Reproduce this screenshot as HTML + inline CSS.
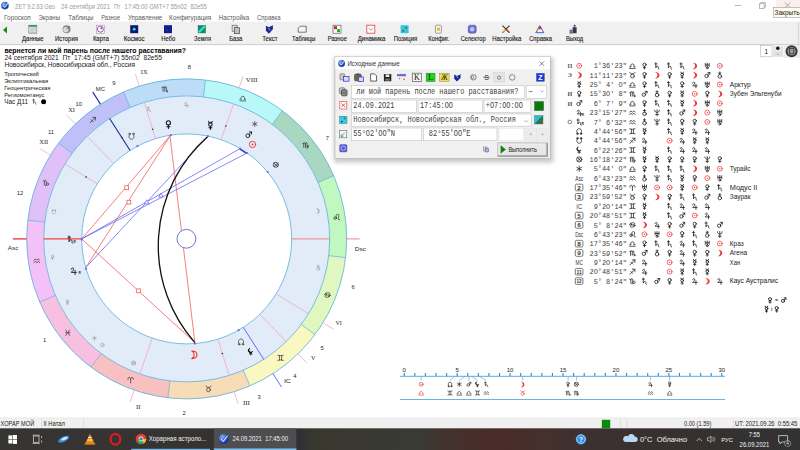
<!DOCTYPE html><html><head><meta charset="utf-8"><style>html,body{margin:0;padding:0;width:800px;height:450px;overflow:hidden;background:#fff}svg{display:block}</style></head><body>
<svg width="800" height="450" viewBox="0 0 800 450" font-family="Liberation Sans">
<defs>
<symbol id="g_sun" viewBox="0 0 10 10" overflow="visible" stroke-linecap="round" stroke-linejoin="round"><circle cx="5" cy="5" r="3.6" fill="none"/><circle cx="5" cy="5" r="1" stroke="none" fill="currentColor"/></symbol>
<symbol id="g_moon" viewBox="0 0 10 10" overflow="visible" stroke-linecap="round" stroke-linejoin="round"><path d="M3.2,0.8 A4.3,4.3 0 0 1 3.2,9.2 A3.2,4.1 0 0 0 3.2,0.8 Z" fill="currentColor"/></symbol>
<symbol id="g_mercury" viewBox="0 0 10 10" overflow="visible" stroke-linecap="round" stroke-linejoin="round"><path d="M3,0.6 A2,2 0 0 0 7,0.6" fill="none"/><circle cx="5" cy="4.2" r="2" fill="none"/><path d="M5,6.2 V9.8 M3.3,8 H6.7" fill="none"/></symbol>
<symbol id="g_venus" viewBox="0 0 10 10" overflow="visible" stroke-linecap="round" stroke-linejoin="round"><circle cx="5" cy="3.4" r="2.4" fill="none"/><path d="M5,5.8 V9.8 M3.2,7.8 H6.8" fill="none"/></symbol>
<symbol id="g_mars" viewBox="0 0 10 10" overflow="visible" stroke-linecap="round" stroke-linejoin="round"><circle cx="4" cy="6.2" r="2.5" fill="none"/><path d="M5.8,4.4 L8.8,1.2 M6,1.2 H8.8 V4" fill="none"/></symbol>
<symbol id="g_jupiter" viewBox="0 0 10 10" overflow="visible" stroke-linecap="round" stroke-linejoin="round"><path d="M2,3 C2,0.8 5.5,0.8 5,3 C4.7,4.6 2.5,6.5 2,7 H8.5 M6.8,4.5 V9.8" fill="none"/></symbol>
<symbol id="g_saturn" viewBox="0 0 10 10" overflow="visible" stroke-linecap="round" stroke-linejoin="round"><path d="M3.2,0.5 V8 C3.2,5 7.5,4.8 7,7.6 C6.7,8.8 6.6,9.6 8,9.8 M1.8,2.2 H5" fill="none"/></symbol>
<symbol id="g_uranus" viewBox="0 0 10 10" overflow="visible" stroke-linecap="round" stroke-linejoin="round"><path d="M2,1.5 C2.5,4 2.5,5 2,6 M8,1.5 C7.5,4 7.5,5 8,6 M2.2,3.8 H7.8 M5,1 V6.5" fill="none"/><circle cx="5" cy="8" r="1.5" fill="none"/></symbol>
<symbol id="g_neptune" viewBox="0 0 10 10" overflow="visible" stroke-linecap="round" stroke-linejoin="round"><path d="M1.5,1.5 C1.5,6 8.5,6 8.5,1.5 M5,0.8 V9.8 M3,7.8 H7" fill="none"/></symbol>
<symbol id="g_earth" viewBox="0 0 10 10" overflow="visible" stroke-linecap="round" stroke-linejoin="round"><circle cx="5" cy="6.8" r="2.6" fill="none"/><path d="M5,4.2 V0.4 M3.3,2 H6.7" fill="none"/></symbol>
<symbol id="g_node" viewBox="0 0 10 10" overflow="visible" stroke-linecap="round" stroke-linejoin="round"><path d="M2.8,8.5 C0.6,6.5 1,1.2 5,1.2 C9,1.2 9.4,6.5 7.2,8.5" fill="none"/><circle cx="2.3" cy="8.6" r="1.1" fill="none"/><circle cx="7.7" cy="8.6" r="1.1" fill="none"/></symbol>
<symbol id="g_snode" viewBox="0 0 10 10" overflow="visible" stroke-linecap="round" stroke-linejoin="round"><path d="M2.8,1.5 C0.6,3.5 1,8.8 5,8.8 C9,8.8 9.4,3.5 7.2,1.5" fill="none"/><circle cx="2.3" cy="1.4" r="1.1" fill="none"/><circle cx="7.7" cy="1.4" r="1.1" fill="none"/></symbol>
<symbol id="g_lilith" viewBox="0 0 10 10" overflow="visible" stroke-linecap="round" stroke-linejoin="round"><path d="M3,0.8 A3.2,3.2 0 1 0 7.5,5 A2.6,2.6 0 1 1 3,0.8 Z" fill="currentColor"/><path d="M5,6.5 V9.8 M3.3,8.3 H6.7" fill="none"/></symbol>
<symbol id="g_fortune" viewBox="0 0 10 10" overflow="visible" stroke-linecap="round" stroke-linejoin="round"><circle cx="5" cy="5" r="3.8" fill="none"/><path d="M2.3,2.3 L7.7,7.7 M7.7,2.3 L2.3,7.7" fill="none"/></symbol>
<symbol id="g_star" viewBox="0 0 10 10" overflow="visible" stroke-linecap="round" stroke-linejoin="round"><path d="M5,1 V9 M1.5,3 L8.5,7 M8.5,3 L1.5,7" fill="none"/></symbol>
<symbol id="g_aries" viewBox="0 0 10 10" overflow="visible" stroke-linecap="round" stroke-linejoin="round"><path d="M1,4.5 C0.5,1 4.5,0.5 5,4 V9.8 M5,4 C5.5,0.5 9.5,1 9,4.5" fill="none"/></symbol>
<symbol id="g_taurus" viewBox="0 0 10 10" overflow="visible" stroke-linecap="round" stroke-linejoin="round"><circle cx="5" cy="6.4" r="2.8" fill="none"/><path d="M1,1 C1.8,3.6 8.2,3.6 9,1" fill="none"/></symbol>
<symbol id="g_gemini" viewBox="0 0 10 10" overflow="visible" stroke-linecap="round" stroke-linejoin="round"><path d="M1,1.2 C3.5,2.2 6.5,2.2 9,1.2 M1,8.8 C3.5,7.8 6.5,7.8 9,8.8 M3.4,1.8 V8.2 M6.6,1.8 V8.2" fill="none"/></symbol>
<symbol id="g_cancer" viewBox="0 0 10 10" overflow="visible" stroke-linecap="round" stroke-linejoin="round"><path d="M1.2,4 C2,1 8,0.8 9,3 M8.8,6 C8,9 2,9.2 1,7" fill="none"/><circle cx="2.6" cy="4.3" r="1.5" fill="none"/><circle cx="7.4" cy="5.7" r="1.5" fill="none"/></symbol>
<symbol id="g_leo" viewBox="0 0 10 10" overflow="visible" stroke-linecap="round" stroke-linejoin="round"><circle cx="2.8" cy="6.5" r="1.9" fill="none"/><path d="M4.7,6.5 C3.5,3 4.5,0.8 6.5,0.8 C9,0.8 8.5,4.5 7.5,6.5 C6.8,8 7.5,9.5 9.5,9" fill="none"/></symbol>
<symbol id="g_virgo" viewBox="0 0 10 10" overflow="visible" stroke-linecap="round" stroke-linejoin="round"><path d="M0.8,2.5 C1.5,1.5 2.2,2 2.2,3 V8.5 M2.2,3 C2.2,1 4.8,1 4.8,3 V8.5 M4.8,3 C4.8,1 7.2,1 7.2,3 V7 C7.2,9.5 9.5,8.5 9.3,6.5 C9,4.5 7,6 7.2,9.8" fill="none"/></symbol>
<symbol id="g_libra" viewBox="0 0 10 10" overflow="visible" stroke-linecap="round" stroke-linejoin="round"><path d="M0.8,9 H9.2 M0.8,6.6 H3 C2,5.5 2.2,2.2 5,2.2 C7.8,2.2 8,5.5 7,6.6 H9.2" fill="none"/></symbol>
<symbol id="g_scorpio" viewBox="0 0 10 10" overflow="visible" stroke-linecap="round" stroke-linejoin="round"><path d="M0.8,2.5 C1.5,1.5 2.2,2 2.2,3 V8.5 M2.2,3 C2.2,1 4.8,1 4.8,3 V8.5 M4.8,3 C4.8,1 7.2,1 7.2,3 V8 C7.2,9 8,9.2 9.2,8.3 M8,7.3 L9.3,8.3 L8.4,9.6" fill="none"/></symbol>
<symbol id="g_sagittarius" viewBox="0 0 10 10" overflow="visible" stroke-linecap="round" stroke-linejoin="round"><path d="M1.2,9 L8.8,1.2 M4.8,1.2 H8.8 V5.2 M2.6,4.6 L5.6,7.6" fill="none"/></symbol>
<symbol id="g_capricorn" viewBox="0 0 10 10" overflow="visible" stroke-linecap="round" stroke-linejoin="round"><path d="M0.8,2 C1.8,1 2.6,2 2.6,3 V8 M2.6,3 C3,0.5 5.5,0.5 5.5,3 V8.5 C5.5,9.8 3.8,9.8 3.6,9 M5.5,6.5 C6,4.5 9.2,4.5 9.2,6.8 C9.2,9 6,9.5 5.5,7.5" fill="none"/></symbol>
<symbol id="g_aquarius" viewBox="0 0 10 10" overflow="visible" stroke-linecap="round" stroke-linejoin="round"><path d="M0.8,4.2 L2.9,2.6 L5,4.2 L7.1,2.6 L9.2,4.2 M0.8,7.8 L2.9,6.2 L5,7.8 L7.1,6.2 L9.2,7.8" fill="none"/></symbol>
<symbol id="g_pisces" viewBox="0 0 10 10" overflow="visible" stroke-linecap="round" stroke-linejoin="round"><path d="M2,0.8 C4.6,3 4.6,7 2,9.2 M8,0.8 C5.4,3 5.4,7 8,9.2 M2,5 H8" fill="none"/></symbol>
<radialGradient id="zetg" cx="0.35" cy="0.3" r="0.8"><stop offset="0" stop-color="#8ab4f0"/><stop offset="0.6" stop-color="#1f4fc0"/><stop offset="1" stop-color="#0a2a80"/></radialGradient>
<linearGradient id="tbg" x1="0" x2="1" y1="0" y2="0"><stop offset="0" stop-color="#363534"/><stop offset="0.26" stop-color="#343332"/><stop offset="0.375" stop-color="#303036"/><stop offset="0.39" stop-color="#38382f"/><stop offset="0.52" stop-color="#3a3a35"/><stop offset="0.575" stop-color="#45302c"/><stop offset="0.63" stop-color="#4a2b28"/><stop offset="0.68" stop-color="#45302e"/><stop offset="0.725" stop-color="#3d3130"/><stop offset="0.8" stop-color="#38302f"/><stop offset="1" stop-color="#323232"/></linearGradient>
</defs>
<rect x="0" y="0" width="800" height="450" fill="#fff"/>
<circle cx="4.9" cy="5.6" r="3.8" fill="url(#zetg)"/><path d="M3,5.4 L4.6,7.4 L8.4,2.6" stroke="#fff" stroke-width="0.9" fill="none"/>
<text x="15.10" y="8.90" font-family="Liberation Sans" font-size="6.8" fill="#9a9a9a" font-weight="normal" text-anchor="start" style="white-space:pre" textLength="39.90" lengthAdjust="spacingAndGlyphs">ZET 9.2.63 Geo</text>
<text x="61.00" y="8.90" font-family="Liberation Sans" font-size="6.8" fill="#9a9a9a" font-weight="normal" text-anchor="start" style="white-space:pre" textLength="49.00" lengthAdjust="spacingAndGlyphs">24 сентября 2021</text>
<text x="114.00" y="8.90" font-family="Liberation Sans" font-size="6.8" fill="#9a9a9a" font-weight="normal" text-anchor="start" style="white-space:pre" textLength="6.20" lengthAdjust="spacingAndGlyphs">Пт</text>
<text x="124.60" y="8.90" font-family="Liberation Sans" font-size="6.8" fill="#9a9a9a" font-weight="normal" text-anchor="start" style="white-space:pre" textLength="82.20" lengthAdjust="spacingAndGlyphs">17:45:00 GMT+7 55n02  82e55</text>
<rect x="776" y="0" width="24" height="12" fill="#fdeeee"/>
<path d="M734.8,5.5 H741.2" stroke="#8a8a8a" stroke-width="0.6"/>
<rect x="759.5" y="3.8" width="4.6" height="4.6" fill="none" stroke="#8a8a8a" stroke-width="0.6"/><path d="M760.8,3.8 V2.6 H765.4 V7.2 H764.1" fill="none" stroke="#8a8a8a" stroke-width="0.6"/>
<path d="M784.6,2.6 L790.4,7.6 M790.4,2.6 L784.6,7.6" stroke="#8a8a8a" stroke-width="0.6"/>
<text x="4.10" y="19.80" font-family="Liberation Sans" font-size="6.9" fill="#5a5a5a" font-weight="normal" text-anchor="start" style="white-space:pre" textLength="26.70" lengthAdjust="spacingAndGlyphs">Гороскоп</text>
<text x="38.50" y="19.80" font-family="Liberation Sans" font-size="6.9" fill="#5a5a5a" font-weight="normal" text-anchor="start" style="white-space:pre" textLength="21.50" lengthAdjust="spacingAndGlyphs">Экраны</text>
<text x="68.20" y="19.80" font-family="Liberation Sans" font-size="6.9" fill="#5a5a5a" font-weight="normal" text-anchor="start" style="white-space:pre" textLength="25.30" lengthAdjust="spacingAndGlyphs">Таблицы</text>
<text x="101.20" y="19.80" font-family="Liberation Sans" font-size="6.9" fill="#5a5a5a" font-weight="normal" text-anchor="start" style="white-space:pre" textLength="19.00" lengthAdjust="spacingAndGlyphs">Разное</text>
<text x="127.90" y="19.80" font-family="Liberation Sans" font-size="6.9" fill="#5a5a5a" font-weight="normal" text-anchor="start" style="white-space:pre" textLength="34.40" lengthAdjust="spacingAndGlyphs">Управление</text>
<text x="169.00" y="19.80" font-family="Liberation Sans" font-size="6.9" fill="#5a5a5a" font-weight="normal" text-anchor="start" style="white-space:pre" textLength="42.20" lengthAdjust="spacingAndGlyphs">Конфигурация</text>
<text x="218.75" y="19.80" font-family="Liberation Sans" font-size="6.9" fill="#5a5a5a" font-weight="normal" text-anchor="start" style="white-space:pre" textLength="30.50" lengthAdjust="spacingAndGlyphs">Настройка</text>
<text x="257.00" y="19.80" font-family="Liberation Sans" font-size="6.9" fill="#5a5a5a" font-weight="normal" text-anchor="start" style="white-space:pre" textLength="23.50" lengthAdjust="spacingAndGlyphs">Справка</text>
<rect x="0" y="21.6" width="800" height="23" fill="#f0f0f0"/>
<rect x="0" y="44.2" width="800" height="0.9" fill="#c8c8c8"/>
<rect x="798" y="21.6" width="0.8" height="22.8" fill="#cfcfcf"/>
<path d="M3,30 L7,26.6 V33.4 Z" fill="#1a8a1a"/>
<text x="22.10" y="40.80" font-family="Liberation Sans" font-size="6.3" fill="#222" font-weight="normal" text-anchor="start" style="white-space:pre" textLength="21.40" lengthAdjust="spacingAndGlyphs" stroke="#111" stroke-width="0.12">Данные</text>
<text x="55.00" y="40.80" font-family="Liberation Sans" font-size="6.3" fill="#222" font-weight="normal" text-anchor="start" style="white-space:pre" textLength="22.90" lengthAdjust="spacingAndGlyphs" stroke="#111" stroke-width="0.12">История</text>
<text x="92.90" y="40.80" font-family="Liberation Sans" font-size="6.3" fill="#222" font-weight="normal" text-anchor="start" style="white-space:pre" textLength="15.90" lengthAdjust="spacingAndGlyphs" stroke="#111" stroke-width="0.12">Карта</text>
<text x="123.80" y="40.80" font-family="Liberation Sans" font-size="6.3" fill="#222" font-weight="normal" text-anchor="start" style="white-space:pre" textLength="20.70" lengthAdjust="spacingAndGlyphs" stroke="#111" stroke-width="0.12">Космос</text>
<text x="161.30" y="40.80" font-family="Liberation Sans" font-size="6.3" fill="#222" font-weight="normal" text-anchor="start" style="white-space:pre" textLength="14.00" lengthAdjust="spacingAndGlyphs" stroke="#111" stroke-width="0.12">Небо</text>
<text x="194.10" y="40.80" font-family="Liberation Sans" font-size="6.3" fill="#222" font-weight="normal" text-anchor="start" style="white-space:pre" textLength="16.90" lengthAdjust="spacingAndGlyphs" stroke="#111" stroke-width="0.12">Земля</text>
<text x="229.20" y="40.80" font-family="Liberation Sans" font-size="6.3" fill="#222" font-weight="normal" text-anchor="start" style="white-space:pre" textLength="13.10" lengthAdjust="spacingAndGlyphs" stroke="#111" stroke-width="0.12">База</text>
<text x="262.20" y="40.80" font-family="Liberation Sans" font-size="6.3" fill="#222" font-weight="normal" text-anchor="start" style="white-space:pre" textLength="15.40" lengthAdjust="spacingAndGlyphs" stroke="#111" stroke-width="0.12">Текст</text>
<text x="292.00" y="40.80" font-family="Liberation Sans" font-size="6.3" fill="#222" font-weight="normal" text-anchor="start" style="white-space:pre" textLength="23.50" lengthAdjust="spacingAndGlyphs" stroke="#111" stroke-width="0.12">Таблицы</text>
<text x="327.80" y="40.80" font-family="Liberation Sans" font-size="6.3" fill="#222" font-weight="normal" text-anchor="start" style="white-space:pre" textLength="19.10" lengthAdjust="spacingAndGlyphs" stroke="#111" stroke-width="0.12">Разное</text>
<text x="357.80" y="40.80" font-family="Liberation Sans" font-size="6.3" fill="#222" font-weight="normal" text-anchor="start" style="white-space:pre" textLength="27.60" lengthAdjust="spacingAndGlyphs" stroke="#111" stroke-width="0.12">Динамика</text>
<text x="393.80" y="40.80" font-family="Liberation Sans" font-size="6.3" fill="#222" font-weight="normal" text-anchor="start" style="white-space:pre" textLength="23.50" lengthAdjust="spacingAndGlyphs" stroke="#111" stroke-width="0.12">Позиция</text>
<text x="428.30" y="40.80" font-family="Liberation Sans" font-size="6.3" fill="#222" font-weight="normal" text-anchor="start" style="white-space:pre" textLength="21.10" lengthAdjust="spacingAndGlyphs" stroke="#111" stroke-width="0.12">Конфиг.</text>
<text x="460.70" y="40.80" font-family="Liberation Sans" font-size="6.3" fill="#222" font-weight="normal" text-anchor="start" style="white-space:pre" textLength="24.90" lengthAdjust="spacingAndGlyphs" stroke="#111" stroke-width="0.12">Селектор</text>
<text x="492.20" y="40.80" font-family="Liberation Sans" font-size="6.3" fill="#222" font-weight="normal" text-anchor="start" style="white-space:pre" textLength="29.10" lengthAdjust="spacingAndGlyphs" stroke="#111" stroke-width="0.12">Настройка</text>
<text x="529.20" y="40.80" font-family="Liberation Sans" font-size="6.3" fill="#222" font-weight="normal" text-anchor="start" style="white-space:pre" textLength="22.70" lengthAdjust="spacingAndGlyphs" stroke="#111" stroke-width="0.12">Справка</text>
<text x="566.00" y="40.80" font-family="Liberation Sans" font-size="6.3" fill="#222" font-weight="normal" text-anchor="start" style="white-space:pre" textLength="17.20" lengthAdjust="spacingAndGlyphs" stroke="#111" stroke-width="0.12">Выход</text>
<rect x="28.8" y="25.2" width="8" height="8" fill="#e8e8e8" stroke="#7a7a7a" stroke-width="0.6"/><rect x="28.8" y="25.2" width="8" height="1.6" fill="#2a8a8a"/><path d="M29.8,28.2 h6 M29.8,30.2 h6 M29.8,32.2 h6" stroke="#8a8a8a" stroke-width="0.5"/>
<circle cx="66.6" cy="29.2" r="4" fill="#8a8a8a"/><circle cx="65.8" cy="29.7" r="2.6" fill="#d8d8d8"/><path d="M66.6,29.2 l3,-3" stroke="#3a8a3a" stroke-width="0.9"/>
<rect x="96.4" y="25.2" width="8" height="8" fill="#fff" stroke="#8a8a8a" stroke-width="0.5"/><circle cx="100.4" cy="29.2" r="3" fill="none" stroke="#8a40c0" stroke-width="0.9"/><circle cx="101.4" cy="28.2" r="1" fill="#e03050"/>
<rect x="130.2" y="25.2" width="8" height="8" fill="#0a1a70"/><circle cx="134.2" cy="29.2" r="1.4" fill="#30e0e0"/>
<rect x="164.0" y="25.2" width="8" height="8" fill="#10208a"/><circle cx="167.0" cy="30.2" r="0.5" fill="#8080ff"/>
<rect x="197.8" y="25.2" width="8" height="8" fill="#1a8a5a"/><path d="M198.8,32.2 l6,-6" stroke="#30e0f0" stroke-width="2"/>
<rect x="232.1" y="25.2" width="5" height="6" fill="#e0e0e0" stroke="#555" stroke-width="0.6"/><rect x="234.6" y="27.7" width="5" height="6" fill="#c0c0c0" stroke="#333" stroke-width="0.6"/>
<path d="M265.9,25.7 l3,1.5 l4,-2 v4 l-4,4.5 l-3,-3 z" fill="#1a2a90"/><path d="M268.4,28.2 l2,2" stroke="#fff" stroke-width="0.7"/>
<path d="M300.2,26.2 h6 v6 h-8 v-4 z" fill="#f4f4f4" stroke="#444" stroke-width="0.7"/>
<rect x="333.0" y="25.2" width="8" height="8" fill="#fff" stroke="#444" stroke-width="0.6"/><rect x="334.0" y="26.2" width="3" height="3" fill="#e02020"/><rect x="337.0" y="29.2" width="3" height="3" fill="#20b020"/>
<rect x="366.8" y="25.2" width="8" height="8" fill="#fff" stroke="#e04040" stroke-width="0.8"/><path d="M368.8,28.2 l2,2 l2,-2" stroke="#e04040" stroke-width="0.7" fill="none"/>
<rect x="400.6" y="25.2" width="8" height="8" fill="#20d0e0"/><circle cx="403.1" cy="30.7" r="1" fill="#e02020"/><circle cx="406.1" cy="27.7" r="1" fill="#e02020"/>
<rect x="435.4" y="25.2" width="6" height="8" rx="1" fill="#f4f4f4" stroke="#666" stroke-width="0.6"/><rect x="436.9" y="27.7" width="3" height="3" fill="#e0c020"/>
<rect x="468.2" y="25.2" width="8" height="8" rx="2" fill="#6a6ae0" stroke="#555" stroke-width="0.5"/><circle cx="472.2" cy="29.2" r="2.2" fill="#c0c0ff"/>
<path d="M502.5,25.7 l7,7 M509.5,25.7 l-7,7" stroke="#303030" stroke-width="1.1"/><path d="M506.0,29.2 l3,3" stroke="#e03020" stroke-width="1.4"/><path d="M503.0,32.2 l2.5,-2.5" stroke="#e0c020" stroke-width="1.2"/>
<path d="M535.8,32.7 l4,-7 l4,7 z" fill="none" stroke="#3050d0" stroke-width="0.9"/><circle cx="539.8" cy="27.7" r="1.5" fill="#e03030"/><path d="M536.8,32.2 l1.5,-2.5" stroke="#e0c020" stroke-width="1"/>
<rect x="572.6" y="27.2" width="4" height="6" fill="#303850"/><rect x="569.6" y="29.7" width="3" height="4" fill="#6a7090"/><circle cx="574.6" cy="25.7" r="1" fill="#303850"/>
<text x="4.40" y="53.00" font-family="Liberation Sans" font-size="6.8" fill="#000" font-weight="bold" text-anchor="start" style="white-space:pre" textLength="181.60" lengthAdjust="spacingAndGlyphs">вернется ли мой парень после нашего расставания?</text>
<text x="4.40" y="59.80" font-family="Liberation Sans" font-size="6.6" fill="#202020" font-weight="normal" text-anchor="start" style="white-space:pre" textLength="157.60" lengthAdjust="spacingAndGlyphs">24 сентября 2021  Пт  17:45 (GMT+7) 55n02  82e55</text>
<text x="4.40" y="66.50" font-family="Liberation Sans" font-size="6.6" fill="#202020" font-weight="normal" text-anchor="start" style="white-space:pre" textLength="130.60" lengthAdjust="spacingAndGlyphs">Новосибирск, Новосибирская обл., Россия</text>
<text x="4.25" y="76.00" font-family="Liberation Sans" font-size="4.6" fill="#202020" font-weight="normal" text-anchor="start" style="white-space:pre" textLength="34.50" lengthAdjust="spacingAndGlyphs">Тропический</text>
<text x="4.25" y="83.00" font-family="Liberation Sans" font-size="4.6" fill="#202020" font-weight="normal" text-anchor="start" style="white-space:pre" textLength="43.75" lengthAdjust="spacingAndGlyphs">Эклиптикальная</text>
<text x="4.25" y="90.00" font-family="Liberation Sans" font-size="4.6" fill="#202020" font-weight="normal" text-anchor="start" style="white-space:pre" textLength="46.25" lengthAdjust="spacingAndGlyphs">Геоцентрическая</text>
<text x="4.25" y="96.80" font-family="Liberation Sans" font-size="4.6" fill="#202020" font-weight="normal" text-anchor="start" style="white-space:pre" textLength="40.25" lengthAdjust="spacingAndGlyphs">Региомонтанус</text>
<text x="4.25" y="104.10" font-family="Liberation Sans" font-size="6.4" fill="#202020" font-weight="normal" text-anchor="start" style="white-space:pre" textLength="23.80" lengthAdjust="spacingAndGlyphs">Час Д11</text>
<use href="#g_saturn" x="31.75" y="98.85" width="5.50" height="5.50" style="color:#333" stroke="#333" stroke-width="1.2"/>
<circle cx="43.6" cy="101.8" r="2.5" fill="#000"/>
<circle cx="186.70" cy="238.90" r="143.00" fill="#e2ecf8"/>
<circle cx="186.70" cy="238.90" r="105.00" fill="#fff"/>
<path d="M91.03,367.15 A160.00,160.00 0 0 0 167.97,397.80 L169.96,380.92 A143.00,143.00 0 0 1 101.19,353.52 Z" fill="#f8c0c0" stroke="none"/>
<path d="M167.97,397.80 A160.00,160.00 0 0 0 249.93,385.88 L243.21,370.26 A143.00,143.00 0 0 1 169.96,380.92 Z" fill="#f8dcb8" stroke="none"/>
<path d="M249.93,385.88 A160.00,160.00 0 0 0 314.95,334.57 L301.32,324.41 A143.00,143.00 0 0 1 243.21,370.26 Z" fill="#f8f8c0" stroke="none"/>
<path d="M314.95,334.57 A160.00,160.00 0 0 0 345.60,257.63 L328.72,255.64 A143.00,143.00 0 0 1 301.32,324.41 Z" fill="#e0f8c0" stroke="none"/>
<path d="M345.60,257.63 A160.00,160.00 0 0 0 333.68,175.67 L318.06,182.39 A143.00,143.00 0 0 1 328.72,255.64 Z" fill="#c0f8c0" stroke="none"/>
<path d="M333.68,175.67 A160.00,160.00 0 0 0 282.37,110.65 L272.21,124.28 A143.00,143.00 0 0 1 318.06,182.39 Z" fill="#a8d8c0" stroke="none"/>
<path d="M282.37,110.65 A160.00,160.00 0 0 0 205.43,80.00 L203.44,96.88 A143.00,143.00 0 0 1 272.21,124.28 Z" fill="#b8f8f8" stroke="none"/>
<path d="M205.43,80.00 A160.00,160.00 0 0 0 123.47,91.92 L130.19,107.54 A143.00,143.00 0 0 1 203.44,96.88 Z" fill="#bcdcf8" stroke="none"/>
<path d="M123.47,91.92 A160.00,160.00 0 0 0 58.45,143.23 L72.08,153.39 A143.00,143.00 0 0 1 130.19,107.54 Z" fill="#c0c0f8" stroke="none"/>
<path d="M58.45,143.23 A160.00,160.00 0 0 0 27.80,220.17 L44.68,222.16 A143.00,143.00 0 0 1 72.08,153.39 Z" fill="#e0c0f8" stroke="none"/>
<path d="M27.80,220.17 A160.00,160.00 0 0 0 39.72,302.13 L55.34,295.41 A143.00,143.00 0 0 1 44.68,222.16 Z" fill="#f4c0f8" stroke="none"/>
<path d="M39.72,302.13 A160.00,160.00 0 0 0 91.03,367.15 L101.19,353.52 A143.00,143.00 0 0 1 55.34,295.41 Z" fill="#f8c0e0" stroke="none"/>
<line x1="101.19" y1="353.52" x2="91.03" y2="367.15" stroke="#5aaedc" stroke-width="0.7"/>
<line x1="169.96" y1="380.92" x2="167.97" y2="397.80" stroke="#5aaedc" stroke-width="0.7"/>
<line x1="243.21" y1="370.26" x2="249.93" y2="385.88" stroke="#5aaedc" stroke-width="0.7"/>
<line x1="301.32" y1="324.41" x2="314.95" y2="334.57" stroke="#5aaedc" stroke-width="0.7"/>
<line x1="328.72" y1="255.64" x2="345.60" y2="257.63" stroke="#5aaedc" stroke-width="0.7"/>
<line x1="318.06" y1="182.39" x2="333.68" y2="175.67" stroke="#5aaedc" stroke-width="0.7"/>
<line x1="272.21" y1="124.28" x2="282.37" y2="110.65" stroke="#5aaedc" stroke-width="0.7"/>
<line x1="203.44" y1="96.88" x2="205.43" y2="80.00" stroke="#5aaedc" stroke-width="0.7"/>
<line x1="130.19" y1="107.54" x2="123.47" y2="91.92" stroke="#5aaedc" stroke-width="0.7"/>
<line x1="72.08" y1="153.39" x2="58.45" y2="143.23" stroke="#5aaedc" stroke-width="0.7"/>
<line x1="44.68" y1="222.16" x2="27.80" y2="220.17" stroke="#5aaedc" stroke-width="0.7"/>
<line x1="55.34" y1="295.41" x2="39.72" y2="302.13" stroke="#5aaedc" stroke-width="0.7"/>
<circle cx="186.70" cy="238.90" r="160.00" fill="none" stroke="#5aaedc" stroke-width="0.8"/>
<circle cx="186.70" cy="238.90" r="143.00" fill="none" stroke="#5aaedc" stroke-width="0.8"/>
<circle cx="186.70" cy="238.90" r="105.00" fill="none" stroke="#5aaedc" stroke-width="0.8"/>
<use href="#g_aries" x="127.23" y="376.24" width="6.80" height="6.80" style="color:#2a2a2a" stroke="#2a2a2a" stroke-width="1.0"/>
<use href="#g_taurus" x="205.11" y="385.42" width="6.80" height="6.80" style="color:#2a2a2a" stroke="#2a2a2a" stroke-width="1.0"/>
<use href="#g_gemini" x="277.15" y="354.43" width="6.80" height="6.80" style="color:#2a2a2a" stroke="#2a2a2a" stroke-width="1.0"/>
<use href="#g_cancer" x="324.04" y="291.57" width="6.80" height="6.80" style="color:#2a2a2a" stroke="#2a2a2a" stroke-width="1.0"/>
<use href="#g_leo" x="333.22" y="213.69" width="6.80" height="6.80" style="color:#2a2a2a" stroke="#2a2a2a" stroke-width="1.0"/>
<use href="#g_virgo" x="302.23" y="141.65" width="6.80" height="6.80" style="color:#2a2a2a" stroke="#2a2a2a" stroke-width="1.0"/>
<use href="#g_libra" x="239.37" y="94.76" width="6.80" height="6.80" style="color:#2a2a2a" stroke="#2a2a2a" stroke-width="1.0"/>
<use href="#g_scorpio" x="161.49" y="85.58" width="6.80" height="6.80" style="color:#2a2a2a" stroke="#2a2a2a" stroke-width="1.0"/>
<use href="#g_sagittarius" x="89.45" y="116.57" width="6.80" height="6.80" style="color:#2a2a2a" stroke="#2a2a2a" stroke-width="1.0"/>
<use href="#g_capricorn" x="42.56" y="179.43" width="6.80" height="6.80" style="color:#2a2a2a" stroke="#2a2a2a" stroke-width="1.0"/>
<use href="#g_aquarius" x="33.38" y="257.31" width="6.80" height="6.80" style="color:#2a2a2a" stroke="#2a2a2a" stroke-width="1.0"/>
<use href="#g_pisces" x="64.37" y="329.35" width="6.80" height="6.80" style="color:#2a2a2a" stroke="#2a2a2a" stroke-width="1.0"/>
<line x1="81.70" y1="238.90" x2="43.70" y2="238.90" stroke="#f04040" stroke-width="1.4"/>
<line x1="26.70" y1="238.90" x2="12.90" y2="238.90" stroke="#f04040" stroke-width="1.4"/>
<line x1="152.30" y1="338.10" x2="139.84" y2="374.01" stroke="#f0a0c8" stroke-width="0.75"/>
<line x1="134.27" y1="390.07" x2="130.18" y2="401.88" stroke="#f0a0c8" stroke-width="0.75"/>
<line x1="217.88" y1="339.16" x2="229.17" y2="375.45" stroke="#f0a0c8" stroke-width="0.75"/>
<line x1="234.21" y1="391.68" x2="237.93" y2="403.62" stroke="#f0a0c8" stroke-width="0.75"/>
<line x1="243.29" y1="327.34" x2="263.77" y2="359.35" stroke="#5a5af0" stroke-width="0.9"/>
<line x1="272.94" y1="373.67" x2="281.56" y2="387.15" stroke="#5a5af0" stroke-width="0.9"/>
<line x1="259.76" y1="314.31" x2="286.20" y2="341.61" stroke="#f0a0c8" stroke-width="0.75"/>
<line x1="298.03" y1="353.82" x2="306.73" y2="362.80" stroke="#f0a0c8" stroke-width="0.75"/>
<line x1="276.15" y1="293.89" x2="308.52" y2="313.79" stroke="#f0a0c8" stroke-width="0.75"/>
<line x1="323.00" y1="322.70" x2="333.65" y2="329.24" stroke="#f0a0c8" stroke-width="0.75"/>
<line x1="291.70" y1="238.90" x2="329.70" y2="238.90" stroke="#f07878" stroke-width="0.9"/>
<line x1="346.70" y1="238.90" x2="359.70" y2="238.90" stroke="#f07878" stroke-width="0.9"/>
<line x1="221.10" y1="139.70" x2="233.56" y2="103.79" stroke="#f0a0c8" stroke-width="0.75"/>
<line x1="239.13" y1="87.73" x2="243.22" y2="75.92" stroke="#f0a0c8" stroke-width="0.75"/>
<line x1="155.52" y1="138.64" x2="144.23" y2="102.35" stroke="#f0a0c8" stroke-width="0.75"/>
<line x1="139.19" y1="86.12" x2="135.47" y2="74.18" stroke="#f0a0c8" stroke-width="0.75"/>
<line x1="130.11" y1="150.46" x2="109.63" y2="118.45" stroke="#1a2a9a" stroke-width="1.1"/>
<line x1="100.46" y1="104.13" x2="92.65" y2="91.92" stroke="#1a2a9a" stroke-width="1.1"/>
<line x1="113.64" y1="163.49" x2="87.20" y2="136.19" stroke="#f0a0c8" stroke-width="0.75"/>
<line x1="75.37" y1="123.98" x2="66.67" y2="115.00" stroke="#f0a0c8" stroke-width="0.75"/>
<line x1="97.25" y1="183.91" x2="64.88" y2="164.01" stroke="#f0a0c8" stroke-width="0.75"/>
<line x1="50.40" y1="155.10" x2="39.75" y2="148.56" stroke="#f0a0c8" stroke-width="0.75"/>
<circle cx="152.61" cy="129.28" r="0.8" fill="#222"/>
<circle cx="121.86" cy="137.57" r="0.8" fill="#222"/>
<circle cx="86.09" cy="177.05" r="0.8" fill="#222"/>
<circle cx="222.33" cy="353.49" r="0.8" fill="#222"/>
<circle cx="225.86" cy="126.00" r="0.8" fill="#222"/>
<text x="140.75" y="74.15" font-family="Liberation Serif" font-size="6.6" fill="#2a2a2a" font-weight="normal" text-anchor="start" style="white-space:pre" textLength="6.75" lengthAdjust="spacingAndGlyphs">IX</text>
<text x="245.80" y="81.60" font-family="Liberation Serif" font-size="6.6" fill="#2a2a2a" font-weight="normal" text-anchor="start" style="white-space:pre" textLength="11.80" lengthAdjust="spacingAndGlyphs">VIII</text>
<text x="68.25" y="112.40" font-family="Liberation Serif" font-size="6.6" fill="#2a2a2a" font-weight="normal" text-anchor="start" style="white-space:pre" textLength="6.75" lengthAdjust="spacingAndGlyphs">XI</text>
<text x="39.25" y="144.15" font-family="Liberation Serif" font-size="6.6" fill="#2a2a2a" font-weight="normal" text-anchor="start" style="white-space:pre" textLength="9.00" lengthAdjust="spacingAndGlyphs">XII</text>
<text x="136.00" y="408.90" font-family="Liberation Serif" font-size="6.6" fill="#2a2a2a" font-weight="normal" text-anchor="start" style="white-space:pre" textLength="4.60" lengthAdjust="spacingAndGlyphs">II</text>
<text x="242.90" y="404.60" font-family="Liberation Serif" font-size="6.6" fill="#2a2a2a" font-weight="normal" text-anchor="start" style="white-space:pre" textLength="7.10" lengthAdjust="spacingAndGlyphs">III</text>
<text x="311.10" y="360.10" font-family="Liberation Serif" font-size="6.6" fill="#2a2a2a" font-weight="normal" text-anchor="start" style="white-space:pre" textLength="4.50" lengthAdjust="spacingAndGlyphs">V</text>
<text x="335.50" y="324.90" font-family="Liberation Serif" font-size="6.6" fill="#2a2a2a" font-weight="normal" text-anchor="start" style="white-space:pre" textLength="6.40" lengthAdjust="spacingAndGlyphs">VI</text>
<text x="283.90" y="382.90" font-family="Liberation Sans" font-size="6.2" fill="#2a2a2a" font-weight="normal" text-anchor="start" style="white-space:pre" textLength="7.10" lengthAdjust="spacingAndGlyphs">IC</text>
<text x="95.75" y="91.05" font-family="Liberation Sans" font-size="6.2" fill="#2a2a2a" font-weight="normal" text-anchor="start" style="white-space:pre" textLength="9.25" lengthAdjust="spacingAndGlyphs">MC</text>
<text x="7.80" y="250.30" font-family="Liberation Sans" font-size="6.2" fill="#2a2a2a" font-weight="normal" text-anchor="start" style="white-space:pre" textLength="10.50" lengthAdjust="spacingAndGlyphs">Asc</text>
<text x="354.80" y="251.10" font-family="Liberation Sans" font-size="6.2" fill="#2a2a2a" font-weight="normal" text-anchor="start" style="white-space:pre" textLength="11.20" lengthAdjust="spacingAndGlyphs">Dsc</text>
<text x="44.70" y="342.40" font-family="Liberation Sans" font-size="5.8" fill="#2a2a2a" font-weight="normal" text-anchor="middle" style="white-space:pre">1</text>
<text x="184.20" y="415.00" font-family="Liberation Sans" font-size="5.8" fill="#2a2a2a" font-weight="normal" text-anchor="middle" style="white-space:pre">2</text>
<text x="259.20" y="398.70" font-family="Liberation Sans" font-size="5.8" fill="#2a2a2a" font-weight="normal" text-anchor="middle" style="white-space:pre">3</text>
<text x="294.80" y="377.90" font-family="Liberation Sans" font-size="5.8" fill="#2a2a2a" font-weight="normal" text-anchor="middle" style="white-space:pre">4</text>
<text x="322.20" y="349.80" font-family="Liberation Sans" font-size="5.8" fill="#2a2a2a" font-weight="normal" text-anchor="middle" style="white-space:pre">5</text>
<text x="353.20" y="288.60" font-family="Liberation Sans" font-size="5.8" fill="#2a2a2a" font-weight="normal" text-anchor="middle" style="white-space:pre">6</text>
<text x="327.30" y="140.40" font-family="Liberation Sans" font-size="5.8" fill="#2a2a2a" font-weight="normal" text-anchor="middle" style="white-space:pre">7</text>
<text x="189.25" y="68.85" font-family="Liberation Sans" font-size="5.8" fill="#2a2a2a" font-weight="normal" text-anchor="middle" style="white-space:pre">8</text>
<text x="113.75" y="84.60" font-family="Liberation Sans" font-size="5.8" fill="#2a2a2a" font-weight="normal" text-anchor="middle" style="white-space:pre">9</text>
<text x="78.75" y="105.85" font-family="Liberation Sans" font-size="5.8" fill="#2a2a2a" font-weight="normal" text-anchor="middle" style="white-space:pre">10</text>
<text x="51.00" y="133.85" font-family="Liberation Sans" font-size="5.8" fill="#2a2a2a" font-weight="normal" text-anchor="middle" style="white-space:pre">11</text>
<text x="20.00" y="194.60" font-family="Liberation Sans" font-size="5.8" fill="#2a2a2a" font-weight="normal" text-anchor="middle" style="white-space:pre">12</text>
<use href="#g_saturn" x="146.25" y="106.55" width="5.50" height="5.50" style="color:#8c8c8c" stroke="#8c8c8c" stroke-width="1.0"/>
<use href="#g_jupiter" x="183.55" y="101.75" width="5.50" height="5.50" style="color:#8c8c8c" stroke="#8c8c8c" stroke-width="1.0"/>
<use href="#g_snode" x="51.30" y="209.50" width="5.00" height="5.00" style="color:#8c8c8c" stroke="#8c8c8c" stroke-width="1.0"/>
<use href="#g_venus" x="50.00" y="254.60" width="5.00" height="5.00" style="color:#8c8c8c" stroke="#8c8c8c" stroke-width="1.0"/>
<use href="#g_mercury" x="64.90" y="299.80" width="5.00" height="5.00" style="color:#8c8c8c" stroke="#8c8c8c" stroke-width="1.0"/>
<use href="#g_star" x="92.00" y="335.60" width="5.00" height="5.00" style="color:#8c8c8c" stroke="#8c8c8c" stroke-width="1.0"/>
<use href="#g_sun" x="99.80" y="342.50" width="5.00" height="5.00" style="color:#8c8c8c" stroke="#8c8c8c" stroke-width="1.0"/>
<use href="#g_fortune" x="130.90" y="360.40" width="5.20" height="5.20" style="color:#8c8c8c" stroke="#8c8c8c" stroke-width="1.1"/>
<use href="#g_moon" x="315.45" y="208.35" width="5.50" height="5.50" style="color:#8c8c8c" stroke="#8c8c8c" stroke-width="1.0"/>
<use href="#g_earth" x="315.45" y="265.05" width="5.50" height="5.50" style="color:#8c8c8c" stroke="#8c8c8c" stroke-width="1.0"/>
<use href="#g_mercury" x="206.00" y="120.80" width="8.80" height="8.80" style="color:#111" stroke="#111" stroke-width="1.15"/>
<use href="#g_venus" x="164.00" y="119.80" width="8.80" height="8.80" style="color:#111" stroke="#111" stroke-width="1.15"/>
<use href="#g_star" x="251.50" y="120.70" width="6.60" height="6.60" style="color:#333" stroke="#333" stroke-width="1.0"/>
<use href="#g_mars" x="244.80" y="131.00" width="7.60" height="7.60" style="color:#111" stroke="#111" stroke-width="1.15"/>
<use href="#g_sun" x="248.10" y="140.00" width="8.80" height="8.80" style="color:#f03030" stroke="#f03030" stroke-width="1.0"/>
<use href="#g_fortune" x="272.50" y="161.50" width="6.60" height="6.60" style="color:#333" stroke="#333" stroke-width="1.25"/>
<use href="#g_snode" x="127.90" y="132.90" width="7.20" height="7.20" style="color:#444" stroke="#444" stroke-width="1.1"/>
<use href="#g_node" x="237.40" y="338.10" width="7.20" height="7.20" style="color:#444" stroke="#444" stroke-width="1.1"/>
<use href="#g_lilith" x="247.20" y="347.90" width="7.20" height="7.20" style="color:#111" stroke="#111" stroke-width="1.3"/>
<use href="#g_saturn" x="66.50" y="235.40" width="8.00" height="8.00" style="color:#222" stroke="#222" stroke-width="1.2"/>
<use href="#g_jupiter" x="69.60" y="266.80" width="8.00" height="8.00" style="color:#222" stroke="#222" stroke-width="1.2"/>
<path d="M191.8,351 C198.6,351 198.6,358.6 191.8,358.6 C195,357 195,352.6 191.8,351 Z" fill="#fff" fill-opacity="0.3" stroke="#f03030" stroke-width="1.1" stroke-linejoin="round"/>
<text x="73.60" y="243.20" font-family="Liberation Sans" font-size="3.2" fill="#222" font-weight="bold" text-anchor="start" style="white-space:pre">R</text>
<text x="78.40" y="274.40" font-family="Liberation Sans" font-size="3.2" fill="#222" font-weight="bold" text-anchor="start" style="white-space:pre">R</text>
<line x1="170.00" y1="136.00" x2="81.70" y2="238.90" stroke="#f06060" stroke-width="0.8"/>
<line x1="170.00" y1="136.00" x2="85.90" y2="267.40" stroke="#f06060" stroke-width="0.8"/>
<line x1="170.00" y1="136.00" x2="194.90" y2="342.60" stroke="#f06060" stroke-width="0.8"/>
<line x1="81.70" y1="238.90" x2="194.90" y2="342.60" stroke="#f06060" stroke-width="0.8"/>
<line x1="246.50" y1="153.30" x2="81.70" y2="238.90" stroke="#6a6af0" stroke-width="0.8"/>
<line x1="239.70" y1="148.80" x2="81.70" y2="238.90" stroke="#6a6af0" stroke-width="0.8"/>
<line x1="207.80" y1="136.40" x2="85.90" y2="267.40" stroke="#6a6af0" stroke-width="0.8"/>
<line x1="239.70" y1="148.80" x2="246.50" y2="153.30" stroke="#3a3ad0" stroke-width="1.6"/>
<rect x="124.80" y="185.80" width="3.8" height="3.8" fill="#fff" stroke="#f06060" stroke-width="0.8"/>
<rect x="127.00" y="200.30" width="3.8" height="3.8" fill="#fff" stroke="#f06060" stroke-width="0.8"/>
<rect x="136.70" y="288.90" width="3.8" height="3.8" fill="#fff" stroke="#f06060" stroke-width="0.8"/>
<path d="M158.70,197.10 l2.3,-4 l2.3,4 z" fill="#fff" stroke="#6a6af0" stroke-width="0.8"/>
<path d="M144.50,203.80 l2.3,-4 l2.3,4 z" fill="#fff" stroke="#6a6af0" stroke-width="0.8"/>
<path d="M207.8,136.4 A145.91,145.91 0 0 0 194.9,342.6" fill="none" stroke="#111" stroke-width="1.3"/>
<circle cx="186.4" cy="238.8" r="9.4" fill="#fff" stroke="#5a6ac0" stroke-width="0.9"/>
<circle cx="170.68" cy="135.13" r="1.1" fill="#6a6af0"/>
<circle cx="207.91" cy="136.06" r="1.1" fill="#6a6af0"/>
<circle cx="240.15" cy="148.52" r="1.1" fill="#6a6af0"/>
<circle cx="247.11" cy="153.02" r="1.1" fill="#6a6af0"/>
<circle cx="86.04" cy="268.79" r="1.1" fill="#6a6af0"/>
<circle cx="81.70" cy="239.61" r="1.1" fill="#6a6af0"/>
<circle cx="194.88" cy="343.58" r="1.1" fill="#6a6af0"/>
<circle cx="238.64" cy="330.15" r="1.1" fill="#6a6af0"/>
<circle cx="137.36" cy="146.21" r="1.1" fill="#6a6af0"/>
<circle cx="267.62" cy="171.99" r="1.1" fill="#6a6af0"/>
<filter id="dsh" x="-20%" y="-20%" width="140%" height="140%"><feGaussianBlur stdDeviation="2.2"/></filter>
<rect x="334.0" y="57.5" width="219.2" height="104.9" fill="#000" opacity="0.22" filter="url(#dsh)"/>
<rect x="335.0" y="56.5" width="215.2" height="101.9" fill="#f0f0f0" stroke="#a8a8a8" stroke-width="0.5"/>
<rect x="335.3" y="56.8" width="214.6" height="12.4" fill="#ffffff"/>
<circle cx="341.6" cy="63.5" r="3.4" fill="url(#zetg)"/><path d="M339.8,63.4 L341.2,65.2 L344.4,61.2" stroke="#fff" stroke-width="0.8" fill="none"/>
<text x="347.40" y="66.10" font-family="Liberation Sans" font-size="6.6" fill="#333" font-weight="normal" text-anchor="start" style="white-space:pre" textLength="52.20" lengthAdjust="spacingAndGlyphs">Исходные данные</text>
<path d="M539.6,61.4 L544,65.8 M544,61.4 L539.6,65.8" stroke="#333" stroke-width="0.6"/>
<rect x="340" y="73.8" width="4.6" height="6" rx="0.6" fill="#c8c8c8" stroke="#666" stroke-width="0.6"/><rect x="343.6" y="76.4" width="5.4" height="4.8" fill="#dcdcf0" stroke="#2a2ad0" stroke-width="0.7"/>
<rect x="354.6" y="74.2" width="6.6" height="6.6" rx="0.8" fill="#6a6a40" stroke="#333" stroke-width="0.6"/><rect x="356.6" y="73.6" width="2.6" height="1.4" fill="#444"/><rect x="358.4" y="77" width="5" height="4.4" fill="#dcdcf0" stroke="#2a2ad0" stroke-width="0.7"/>
<path d="M370.6,73.9 h4 l2,2 v5.2 h-6 z" fill="#fff" stroke="#222" stroke-width="0.7"/>
<rect x="383.9" y="73.9" width="7.4" height="7.4" rx="0.6" fill="#222"/><rect x="385.6" y="74.4" width="3.8" height="2.6" fill="#e8e8e8"/><rect x="385.4" y="78.6" width="4.4" height="2.2" fill="#777"/>
<path d="M397,75 h9" stroke="#2a3ad0" stroke-width="1.4"/><path d="M397,76.3 h9" stroke="#a090c0" stroke-width="0.5"/><circle cx="399.6" cy="78.6" r="0.7" fill="#e02020"/><circle cx="404" cy="79.4" r="0.8" fill="#f05050"/>
<rect x="412.3" y="73.2" width="9" height="8.3" fill="#f8f8f8" stroke="#555" stroke-width="0.7"/>
<text x="416.80" y="80.40" font-family="Liberation Serif" font-size="8" fill="#111" font-weight="normal" text-anchor="middle" style="white-space:pre">K</text>
<rect x="426.2" y="73.2" width="8.8" height="8.3" fill="#10e010" stroke="#555" stroke-width="0.5"/>
<text x="430.60" y="80.40" font-family="Liberation Serif" font-size="8" fill="#111" font-weight="normal" text-anchor="middle" style="white-space:pre">L</text>
<rect x="439.7" y="73.2" width="9.4" height="8.3" fill="#f0e040" stroke="#888" stroke-width="0.5"/>
<text x="444.40" y="80.00" font-family="Liberation Serif" font-size="7.4" fill="#111" font-weight="normal" text-anchor="middle" style="white-space:pre" font-style="italic">Ж</text>
<path d="M454.2,74.4 l2.8,1.6 l3.6,-1.8 v3.6 l-3.6,3.8 l-2.8,-2.8 z" fill="#1a2a90"/><path d="M456.4,76.2 l1.6,1.8" stroke="#fff" stroke-width="0.6"/>
<circle cx="473.4" cy="77.3" r="2.7" fill="none" stroke="#555" stroke-width="0.7"/><circle cx="472.6" cy="77.3" r="1.3" fill="none" stroke="#555" stroke-width="0.6"/>
<text x="486.50" y="80.00" font-family="Liberation Sans" font-size="7" fill="#333" font-weight="normal" text-anchor="middle" style="white-space:pre">S</text>
<path d="M483.2,77.3 h6.6" stroke="#333" stroke-width="0.6"/>
<rect x="493.6" y="72.6" width="11" height="9.4" fill="#e4e4e4" stroke="#cfcfcf" stroke-width="0.5"/>
<circle cx="499.1" cy="77.6" r="1.6" fill="none" stroke="#444" stroke-width="0.6"/>
<circle cx="512.2" cy="77.4" r="2.8" fill="none" stroke="#444" stroke-width="0.6"/>
<rect x="536.4" y="73.3" width="8" height="8" fill="#1a3ae0" stroke="#555" stroke-width="0.4"/>
<text x="540.40" y="80.10" font-family="Liberation Sans" font-size="7" fill="#fff" font-weight="bold" text-anchor="middle" style="white-space:pre">Z</text>
<rect x="351.40" y="85.30" width="172.80" height="13.30" fill="#fff" stroke="#c4c4c4" stroke-width="0.6"/>
<text x="356.30" y="94.40" font-family="Liberation Mono" font-size="8.2" fill="#404040" font-weight="normal" text-anchor="start" style="white-space:pre" textLength="162.00" lengthAdjust="spacingAndGlyphs">ли мой парень после нашего расставания?</text>
<rect x="526.40" y="85.60" width="20.20" height="12.70" fill="#fff" stroke="#c4c4c4" stroke-width="0.6"/>
<path d="M528.6,91.6 h4" stroke="#333" stroke-width="0.6"/><path d="M540.4,90.6 l1.6,1.6 l1.6,-1.6" stroke="#555" stroke-width="0.5" fill="none"/>
<rect x="351.40" y="100.00" width="64.90" height="12.40" fill="#fff" stroke="#c4c4c4" stroke-width="0.6"/>
<text x="353.30" y="108.10" font-family="Liberation Mono" font-size="8.2" fill="#404040" font-weight="normal" text-anchor="start" style="white-space:pre" textLength="41.00" lengthAdjust="spacingAndGlyphs">24.O9.2O21</text>
<rect x="418.10" y="100.00" width="64.50" height="12.40" fill="#fff" stroke="#c4c4c4" stroke-width="0.6"/>
<text x="420.00" y="108.10" font-family="Liberation Mono" font-size="8.2" fill="#404040" font-weight="normal" text-anchor="start" style="white-space:pre" textLength="33.00" lengthAdjust="spacingAndGlyphs">17:45:OO</text>
<rect x="484.00" y="100.00" width="46.90" height="12.40" fill="#fff" stroke="#c4c4c4" stroke-width="0.6"/>
<text x="485.80" y="108.10" font-family="Liberation Mono" font-size="8.2" fill="#404040" font-weight="normal" text-anchor="start" style="white-space:pre" textLength="37.00" lengthAdjust="spacingAndGlyphs">+O7:OO:OO</text>
<rect x="534.5" y="101.5" width="9.1" height="9.1" fill="#087a08" stroke="#444" stroke-width="0.4"/>
<rect x="351.40" y="114.00" width="180.20" height="12.20" fill="#fff" stroke="#c4c4c4" stroke-width="0.6"/>
<text x="353.30" y="122.10" font-family="Liberation Mono" font-size="8.2" fill="#404040" font-weight="normal" text-anchor="start" style="white-space:pre" textLength="162.50" lengthAdjust="spacingAndGlyphs">Новосибирск, Новосибирская обл., Россия</text>
<path d="M524.6,120.4 l1.6,1.6 l1.6,-1.6" stroke="#555" stroke-width="0.5" fill="none"/>
<rect x="534.6" y="115.6" width="8.4" height="8.4" fill="#20c0d0" stroke="#555" stroke-width="0.4"/><path d="M534.8,123.8 l8,-8 v8 z" fill="#1a7a3a"/><circle cx="540.4" cy="121.4" r="1.1" fill="#e03030"/>
<rect x="351.40" y="128.00" width="70.30" height="12.70" fill="#fff" stroke="#c4c4c4" stroke-width="0.6"/>
<text x="353.30" y="136.20" font-family="Liberation Mono" font-size="8.2" fill="#404040" font-weight="normal" text-anchor="start" style="white-space:pre" textLength="41.70" lengthAdjust="spacingAndGlyphs">55°O2'OO"N</text>
<rect x="423.30" y="128.00" width="73.70" height="12.70" fill="#fff" stroke="#c4c4c4" stroke-width="0.6"/>
<text x="428.80" y="136.20" font-family="Liberation Mono" font-size="8.2" fill="#404040" font-weight="normal" text-anchor="start" style="white-space:pre" textLength="41.70" lengthAdjust="spacingAndGlyphs">82°55'OO"E</text>
<rect x="499.2" y="128.3" width="24.2" height="12.2" fill="#fff" stroke="#e4e4e4" stroke-width="0.5"/>
<rect x="525" y="128.3" width="11.5" height="12.2" fill="#ececec" stroke="#e0e0e0" stroke-width="0.4"/><rect x="536.8" y="128.3" width="11.3" height="12.2" fill="#ececec" stroke="#e0e0e0" stroke-width="0.4"/>
<path d="M531.4,133.3 l-1,1 l1,1" stroke="#444" stroke-width="0.6" fill="none"/><path d="M542,133.3 l1,1 l-1,1" stroke="#444" stroke-width="0.6" fill="none"/>
<rect x="339.4" y="87.8" width="5.4" height="6" rx="1" fill="#c8c8c8" stroke="#555" stroke-width="0.6"/><rect x="341.6" y="89.8" width="5.4" height="6" rx="1" fill="#9a9a9a" stroke="#222" stroke-width="0.7"/><path d="M342.6,92 h3.4 M342.6,93.6 h3.4" stroke="#333" stroke-width="0.5"/>
<rect x="339.8" y="101.6" width="7" height="7.4" fill="#fff" stroke="#e05050" stroke-width="0.7"/><path d="M341.4,103.4 l3.8,3.8 M345.2,103.4 l-3.8,3.8" stroke="#e04040" stroke-width="0.9"/>
<rect x="339.6" y="116.2" width="7.4" height="7.4" fill="#20d8e8" stroke="#555" stroke-width="0.4"/><circle cx="344.6" cy="118.4" r="0.9" fill="#e02020"/><circle cx="341.8" cy="121.6" r="0.9" fill="#2030a0"/>
<rect x="339.6" y="130.6" width="7.2" height="7.2" fill="#f4f4f4" stroke="#555" stroke-width="0.5"/><path d="M341.2,136.4 l3.4,-3.4 M341.2,134.4 v2 h2" stroke="#20a040" stroke-width="0.8" fill="none"/>
<rect x="339.6" y="144.6" width="7.4" height="7.4" rx="1.2" fill="#5a5ae8" stroke="#555" stroke-width="0.4"/><circle cx="343.3" cy="148.3" r="2.2" fill="none" stroke="#e0e0ff" stroke-width="0.6"/>
<rect x="483.4" y="147" width="3.6" height="4" fill="#d8d8d8" stroke="#555" stroke-width="0.4"/><rect x="485.4" y="148.6" width="3.4" height="3.4" fill="#b0b0e8" stroke="#3a3ab0" stroke-width="0.4"/>
<rect x="497.4" y="142.6" width="50.4" height="14.1" fill="#7e7e7e"/>
<rect x="497.4" y="142.6" width="49.4" height="13.1" fill="#e4e4e4"/>
<rect x="498.3" y="143.5" width="48.3" height="12" fill="#a8a8a8"/>
<rect x="498.3" y="143.5" width="47.4" height="11.1" fill="#f4f4f4"/>
<rect x="499.2" y="144.4" width="46.4" height="10.2" fill="#e8e8e8"/>
<path d="M500.6,145.2 L505.9,149.5 L500.6,153.8 Z" fill="#108010"/>
<text x="508.40" y="152.00" font-family="Liberation Sans" font-size="6.4" fill="#222" font-weight="normal" text-anchor="start" style="white-space:pre" textLength="28.50" lengthAdjust="spacingAndGlyphs">Выполнить</text>
<rect x="760.6" y="45.6" width="11.4" height="11.2" fill="#fff" stroke="#a8a8a8" stroke-width="0.5"/>
<text x="764.40" y="54.20" font-family="Liberation Sans" font-size="6.6" fill="#222" font-weight="normal" text-anchor="start" style="white-space:pre">1</text>
<rect x="773" y="45.6" width="10" height="5.6" fill="#e4e4e4"/><rect x="773" y="51.4" width="10" height="5.4" fill="#e0e0e0"/>
<circle cx="777.8" cy="48.2" r="1.7" fill="#111"/><circle cx="777.8" cy="54.2" r="0.6" fill="#999"/>
<rect x="783.6" y="44.8" width="16.4" height="13" fill="#ececec"/>
<circle cx="791.6" cy="51.2" r="6" fill="#3a3a3a"/><circle cx="791.6" cy="51.2" r="4" fill="#9a9a9a"/><rect x="789.4" y="48.6" width="4.4" height="5.2" fill="none" stroke="#333" stroke-width="0.8"/>
<text x="569.80" y="68.10" font-family="Liberation Serif" font-size="6.2" fill="#555" font-weight="bold" text-anchor="middle" style="white-space:pre">П</text>
<use href="#g_sun" x="575.80" y="62.40" width="6.80" height="6.80" style="color:#f03030" stroke="#f03030" stroke-width="1.05"/>
<text x="589.60" y="68.40" font-family="Liberation Mono" font-size="7.8" fill="#404040" font-weight="normal" text-anchor="start" style="white-space:pre" textLength="37.20" lengthAdjust="spacingAndGlyphs"> 1°36'23"</text>
<use href="#g_libra" x="629.10" y="62.50" width="6.60" height="6.60" style="color:#222" stroke="#222" stroke-width="1.15"/>
<use href="#g_venus" x="641.10" y="62.40" width="6.80" height="6.80" style="color:#111" stroke="#111" stroke-width="1.1"/>
<use href="#g_saturn" x="653.65" y="62.40" width="6.80" height="6.80" style="color:#111" stroke="#111" stroke-width="1.1"/>
<use href="#g_saturn" x="666.20" y="62.40" width="6.80" height="6.80" style="color:#111" stroke="#111" stroke-width="1.1"/>
<use href="#g_saturn" x="678.75" y="62.40" width="6.80" height="6.80" style="color:#111" stroke="#111" stroke-width="1.1"/>
<path d="M692.50,62.40 C698.70,62.80 698.70,69.00 692.50,69.20 C696.10,67.60 696.10,64.00 692.50,62.40 Z" fill="#f03030"/>
<use href="#g_uranus" x="703.85" y="62.40" width="6.80" height="6.80" style="color:#111" stroke="#111" stroke-width="1.1"/>
<use href="#g_sun" x="716.40" y="62.40" width="6.80" height="6.80" style="color:#f03030" stroke="#f03030" stroke-width="1.05"/>
<text x="569.80" y="77.46" font-family="Liberation Serif" font-size="6.2" fill="#555" font-weight="bold" text-anchor="middle" style="white-space:pre">Э</text>
<path d="M577.20,71.76 C583.40,72.16 583.40,78.36 577.20,78.56 C580.60,76.96 580.60,73.36 577.20,71.76 Z" fill="#f03030"/>
<text x="589.60" y="77.76" font-family="Liberation Mono" font-size="7.8" fill="#404040" font-weight="normal" text-anchor="start" style="white-space:pre" textLength="37.20" lengthAdjust="spacingAndGlyphs">11°11'23"</text>
<use href="#g_taurus" x="629.10" y="71.86" width="6.60" height="6.60" style="color:#222" stroke="#222" stroke-width="1.15"/>
<use href="#g_venus" x="641.10" y="71.76" width="6.80" height="6.80" style="color:#111" stroke="#111" stroke-width="1.1"/>
<path d="M654.85,71.76 C661.05,72.16 661.05,78.36 654.85,78.56 C658.45,76.96 658.45,73.36 654.85,71.76 Z" fill="#f03030"/>
<use href="#g_venus" x="666.20" y="71.76" width="6.80" height="6.80" style="color:#111" stroke="#111" stroke-width="1.1"/>
<use href="#g_mercury" x="678.75" y="71.76" width="6.80" height="6.80" style="color:#111" stroke="#111" stroke-width="1.1"/>
<path d="M692.50,71.76 C698.70,72.16 698.70,78.36 692.50,78.56 C696.10,76.96 696.10,73.36 692.50,71.76 Z" fill="#f03030"/>
<use href="#g_mars" x="703.85" y="71.76" width="6.80" height="6.80" style="color:#111" stroke="#111" stroke-width="1.1"/>
<use href="#g_earth" x="716.40" y="71.76" width="6.80" height="6.80" style="color:#111" stroke="#111" stroke-width="1.1"/>
<use href="#g_mercury" x="575.80" y="81.12" width="6.80" height="6.80" style="color:#1a1a1a" stroke="#1a1a1a" stroke-width="1.1"/>
<text x="589.60" y="87.12" font-family="Liberation Mono" font-size="7.8" fill="#404040" font-weight="normal" text-anchor="start" style="white-space:pre" textLength="37.20" lengthAdjust="spacingAndGlyphs">25° 4' O"</text>
<use href="#g_libra" x="629.10" y="81.22" width="6.60" height="6.60" style="color:#222" stroke="#222" stroke-width="1.15"/>
<use href="#g_venus" x="641.10" y="81.12" width="6.80" height="6.80" style="color:#111" stroke="#111" stroke-width="1.1"/>
<use href="#g_saturn" x="653.65" y="81.12" width="6.80" height="6.80" style="color:#111" stroke="#111" stroke-width="1.1"/>
<use href="#g_saturn" x="666.20" y="81.12" width="6.80" height="6.80" style="color:#111" stroke="#111" stroke-width="1.1"/>
<use href="#g_venus" x="678.75" y="81.12" width="6.80" height="6.80" style="color:#111" stroke="#111" stroke-width="1.1"/>
<use href="#g_jupiter" x="691.30" y="81.12" width="6.80" height="6.80" style="color:#111" stroke="#111" stroke-width="1.1"/>
<use href="#g_uranus" x="703.85" y="81.12" width="6.80" height="6.80" style="color:#111" stroke="#111" stroke-width="1.1"/>
<use href="#g_sun" x="716.40" y="81.12" width="6.80" height="6.80" style="color:#f03030" stroke="#f03030" stroke-width="1.05"/>
<text x="729.80" y="86.92" font-family="Liberation Sans" font-size="6.6" fill="#222" font-weight="normal" text-anchor="start" style="white-space:pre" textLength="20.70" lengthAdjust="spacingAndGlyphs">Арктур</text>
<text x="569.80" y="96.18" font-family="Liberation Serif" font-size="6.2" fill="#555" font-weight="bold" text-anchor="middle" style="white-space:pre">И</text>
<use href="#g_venus" x="575.80" y="90.48" width="6.80" height="6.80" style="color:#1a1a1a" stroke="#1a1a1a" stroke-width="1.1"/>
<text x="589.60" y="96.48" font-family="Liberation Mono" font-size="7.8" fill="#404040" font-weight="normal" text-anchor="start" style="white-space:pre" textLength="37.20" lengthAdjust="spacingAndGlyphs">15°3O' 8"</text>
<use href="#g_scorpio" x="629.10" y="90.58" width="6.60" height="6.60" style="color:#222" stroke="#222" stroke-width="1.15"/>
<use href="#g_mars" x="641.10" y="90.48" width="6.80" height="6.80" style="color:#111" stroke="#111" stroke-width="1.1"/>
<use href="#g_earth" x="653.65" y="90.48" width="6.80" height="6.80" style="color:#111" stroke="#111" stroke-width="1.1"/>
<use href="#g_venus" x="666.20" y="90.48" width="6.80" height="6.80" style="color:#111" stroke="#111" stroke-width="1.1"/>
<use href="#g_mercury" x="678.75" y="90.48" width="6.80" height="6.80" style="color:#111" stroke="#111" stroke-width="1.1"/>
<use href="#g_sun" x="691.30" y="90.48" width="6.80" height="6.80" style="color:#f03030" stroke="#f03030" stroke-width="1.05"/>
<use href="#g_venus" x="703.85" y="90.48" width="6.80" height="6.80" style="color:#111" stroke="#111" stroke-width="1.1"/>
<path d="M717.60,90.48 C723.80,90.88 723.80,97.08 717.60,97.28 C721.20,95.68 721.20,92.08 717.60,90.48 Z" fill="#f03030"/>
<text x="729.80" y="96.28" font-family="Liberation Sans" font-size="6.6" fill="#222" font-weight="normal" text-anchor="start" style="white-space:pre" textLength="51.75" lengthAdjust="spacingAndGlyphs">Зубен Эльгенуби</text>
<text x="569.80" y="105.54" font-family="Liberation Serif" font-size="6.2" fill="#555" font-weight="bold" text-anchor="middle" style="white-space:pre">И</text>
<use href="#g_mars" x="575.80" y="99.84" width="6.80" height="6.80" style="color:#1a1a1a" stroke="#1a1a1a" stroke-width="1.1"/>
<text x="589.60" y="105.84" font-family="Liberation Mono" font-size="7.8" fill="#404040" font-weight="normal" text-anchor="start" style="white-space:pre" textLength="37.20" lengthAdjust="spacingAndGlyphs"> 6° 7' 9"</text>
<use href="#g_libra" x="629.10" y="99.94" width="6.60" height="6.60" style="color:#222" stroke="#222" stroke-width="1.15"/>
<use href="#g_venus" x="641.10" y="99.84" width="6.80" height="6.80" style="color:#111" stroke="#111" stroke-width="1.1"/>
<use href="#g_saturn" x="653.65" y="99.84" width="6.80" height="6.80" style="color:#111" stroke="#111" stroke-width="1.1"/>
<use href="#g_saturn" x="666.20" y="99.84" width="6.80" height="6.80" style="color:#111" stroke="#111" stroke-width="1.1"/>
<use href="#g_mercury" x="678.75" y="99.84" width="6.80" height="6.80" style="color:#111" stroke="#111" stroke-width="1.1"/>
<path d="M692.50,99.84 C698.70,100.24 698.70,106.44 692.50,106.64 C696.10,105.04 696.10,101.44 692.50,99.84 Z" fill="#f03030"/>
<use href="#g_uranus" x="703.85" y="99.84" width="6.80" height="6.80" style="color:#111" stroke="#111" stroke-width="1.1"/>
<use href="#g_sun" x="716.40" y="99.84" width="6.80" height="6.80" style="color:#f03030" stroke="#f03030" stroke-width="1.05"/>
<use href="#g_jupiter" x="575.80" y="109.20" width="6.80" height="6.80" style="color:#1a1a1a" stroke="#1a1a1a" stroke-width="1.1"/>
<text x="581.60" y="116.00" font-family="Liberation Sans" font-size="3.4" fill="#222" font-weight="bold" text-anchor="start" style="white-space:pre">R</text>
<text x="589.60" y="115.20" font-family="Liberation Mono" font-size="7.8" fill="#404040" font-weight="normal" text-anchor="start" style="white-space:pre" textLength="37.20" lengthAdjust="spacingAndGlyphs">23°15'27"</text>
<use href="#g_aquarius" x="629.10" y="109.30" width="6.60" height="6.60" style="color:#222" stroke="#222" stroke-width="1.15"/>
<use href="#g_earth" x="641.10" y="109.20" width="6.80" height="6.80" style="color:#111" stroke="#111" stroke-width="1.1"/>
<use href="#g_neptune" x="653.65" y="109.20" width="6.80" height="6.80" style="color:#111" stroke="#111" stroke-width="1.1"/>
<use href="#g_saturn" x="666.20" y="109.20" width="6.80" height="6.80" style="color:#111" stroke="#111" stroke-width="1.1"/>
<use href="#g_mars" x="678.75" y="109.20" width="6.80" height="6.80" style="color:#111" stroke="#111" stroke-width="1.1"/>
<path d="M692.50,109.20 C698.70,109.60 698.70,115.80 692.50,116.00 C696.10,114.40 696.10,110.80 692.50,109.20 Z" fill="#f03030"/>
<use href="#g_sun" x="703.85" y="109.20" width="6.80" height="6.80" style="color:#f03030" stroke="#f03030" stroke-width="1.05"/>
<use href="#g_uranus" x="716.40" y="109.20" width="6.80" height="6.80" style="color:#111" stroke="#111" stroke-width="1.1"/>
<circle cx="569.8" cy="121.96" r="1.8" fill="none" stroke="#555" stroke-width="0.7"/>
<use href="#g_saturn" x="575.80" y="118.56" width="6.80" height="6.80" style="color:#1a1a1a" stroke="#1a1a1a" stroke-width="1.1"/>
<text x="581.60" y="125.36" font-family="Liberation Sans" font-size="3.4" fill="#222" font-weight="bold" text-anchor="start" style="white-space:pre">R</text>
<text x="589.60" y="124.56" font-family="Liberation Mono" font-size="7.8" fill="#404040" font-weight="normal" text-anchor="start" style="white-space:pre" textLength="37.20" lengthAdjust="spacingAndGlyphs"> 7° 6'32"</text>
<use href="#g_aquarius" x="629.10" y="118.66" width="6.60" height="6.60" style="color:#222" stroke="#222" stroke-width="1.15"/>
<use href="#g_earth" x="641.10" y="118.56" width="6.80" height="6.80" style="color:#111" stroke="#111" stroke-width="1.1"/>
<use href="#g_neptune" x="653.65" y="118.56" width="6.80" height="6.80" style="color:#111" stroke="#111" stroke-width="1.1"/>
<use href="#g_saturn" x="666.20" y="118.56" width="6.80" height="6.80" style="color:#111" stroke="#111" stroke-width="1.1"/>
<use href="#g_venus" x="678.75" y="118.56" width="6.80" height="6.80" style="color:#111" stroke="#111" stroke-width="1.1"/>
<use href="#g_venus" x="691.30" y="118.56" width="6.80" height="6.80" style="color:#111" stroke="#111" stroke-width="1.1"/>
<use href="#g_sun" x="703.85" y="118.56" width="6.80" height="6.80" style="color:#f03030" stroke="#f03030" stroke-width="1.05"/>
<use href="#g_uranus" x="716.40" y="118.56" width="6.80" height="6.80" style="color:#111" stroke="#111" stroke-width="1.1"/>
<use href="#g_node" x="575.80" y="127.92" width="6.80" height="6.80" style="color:#1a1a1a" stroke="#1a1a1a" stroke-width="1.1"/>
<text x="589.60" y="133.92" font-family="Liberation Mono" font-size="7.8" fill="#404040" font-weight="normal" text-anchor="start" style="white-space:pre" textLength="37.20" lengthAdjust="spacingAndGlyphs"> 4°44'56"</text>
<use href="#g_gemini" x="629.10" y="128.02" width="6.60" height="6.60" style="color:#222" stroke="#222" stroke-width="1.15"/>
<use href="#g_mercury" x="641.10" y="127.92" width="6.80" height="6.80" style="color:#111" stroke="#111" stroke-width="1.1"/>
<use href="#g_saturn" x="666.20" y="127.92" width="6.80" height="6.80" style="color:#111" stroke="#111" stroke-width="1.1"/>
<use href="#g_mercury" x="678.75" y="127.92" width="6.80" height="6.80" style="color:#111" stroke="#111" stroke-width="1.1"/>
<use href="#g_jupiter" x="691.30" y="127.92" width="6.80" height="6.80" style="color:#111" stroke="#111" stroke-width="1.1"/>
<use href="#g_jupiter" x="703.85" y="127.92" width="6.80" height="6.80" style="color:#111" stroke="#111" stroke-width="1.1"/>
<use href="#g_snode" x="575.80" y="137.28" width="6.80" height="6.80" style="color:#1a1a1a" stroke="#1a1a1a" stroke-width="1.1"/>
<text x="589.60" y="143.28" font-family="Liberation Mono" font-size="7.8" fill="#404040" font-weight="normal" text-anchor="start" style="white-space:pre" textLength="37.20" lengthAdjust="spacingAndGlyphs"> 4°44'56"</text>
<use href="#g_sagittarius" x="629.10" y="137.38" width="6.60" height="6.60" style="color:#222" stroke="#222" stroke-width="1.15"/>
<use href="#g_jupiter" x="641.10" y="137.28" width="6.80" height="6.80" style="color:#111" stroke="#111" stroke-width="1.1"/>
<use href="#g_sun" x="666.20" y="137.28" width="6.80" height="6.80" style="color:#f03030" stroke="#f03030" stroke-width="1.05"/>
<use href="#g_jupiter" x="678.75" y="137.28" width="6.80" height="6.80" style="color:#111" stroke="#111" stroke-width="1.1"/>
<use href="#g_mercury" x="691.30" y="137.28" width="6.80" height="6.80" style="color:#111" stroke="#111" stroke-width="1.1"/>
<use href="#g_mercury" x="703.85" y="137.28" width="6.80" height="6.80" style="color:#111" stroke="#111" stroke-width="1.1"/>
<use href="#g_lilith" x="575.80" y="146.64" width="6.80" height="6.80" style="color:#1a1a1a" stroke="#1a1a1a" stroke-width="1.1"/>
<text x="589.60" y="152.64" font-family="Liberation Mono" font-size="7.8" fill="#404040" font-weight="normal" text-anchor="start" style="white-space:pre" textLength="37.20" lengthAdjust="spacingAndGlyphs"> 6°22'26"</text>
<use href="#g_gemini" x="629.10" y="146.74" width="6.60" height="6.60" style="color:#222" stroke="#222" stroke-width="1.15"/>
<use href="#g_mercury" x="641.10" y="146.64" width="6.80" height="6.80" style="color:#111" stroke="#111" stroke-width="1.1"/>
<use href="#g_saturn" x="666.20" y="146.64" width="6.80" height="6.80" style="color:#111" stroke="#111" stroke-width="1.1"/>
<use href="#g_jupiter" x="678.75" y="146.64" width="6.80" height="6.80" style="color:#111" stroke="#111" stroke-width="1.1"/>
<use href="#g_jupiter" x="691.30" y="146.64" width="6.80" height="6.80" style="color:#111" stroke="#111" stroke-width="1.1"/>
<use href="#g_jupiter" x="703.85" y="146.64" width="6.80" height="6.80" style="color:#111" stroke="#111" stroke-width="1.1"/>
<use href="#g_fortune" x="575.80" y="156.00" width="6.80" height="6.80" style="color:#1a1a1a" stroke="#1a1a1a" stroke-width="1.1"/>
<text x="589.60" y="162.00" font-family="Liberation Mono" font-size="7.8" fill="#404040" font-weight="normal" text-anchor="start" style="white-space:pre" textLength="37.20" lengthAdjust="spacingAndGlyphs">16°18'22"</text>
<use href="#g_virgo" x="629.10" y="156.10" width="6.60" height="6.60" style="color:#222" stroke="#222" stroke-width="1.15"/>
<use href="#g_mercury" x="641.10" y="156.00" width="6.80" height="6.80" style="color:#111" stroke="#111" stroke-width="1.1"/>
<use href="#g_mercury" x="653.65" y="156.00" width="6.80" height="6.80" style="color:#111" stroke="#111" stroke-width="1.1"/>
<use href="#g_venus" x="666.20" y="156.00" width="6.80" height="6.80" style="color:#111" stroke="#111" stroke-width="1.1"/>
<use href="#g_venus" x="678.75" y="156.00" width="6.80" height="6.80" style="color:#111" stroke="#111" stroke-width="1.1"/>
<use href="#g_venus" x="691.30" y="156.00" width="6.80" height="6.80" style="color:#111" stroke="#111" stroke-width="1.1"/>
<use href="#g_neptune" x="703.85" y="156.00" width="6.80" height="6.80" style="color:#111" stroke="#111" stroke-width="1.1"/>
<use href="#g_venus" x="716.40" y="156.00" width="6.80" height="6.80" style="color:#111" stroke="#111" stroke-width="1.1"/>
<use href="#g_star" x="575.80" y="165.36" width="6.80" height="6.80" style="color:#1a1a1a" stroke="#1a1a1a" stroke-width="1.1"/>
<text x="589.60" y="171.36" font-family="Liberation Mono" font-size="7.8" fill="#404040" font-weight="normal" text-anchor="start" style="white-space:pre" textLength="37.20" lengthAdjust="spacingAndGlyphs"> 5°44' O"</text>
<use href="#g_libra" x="629.10" y="165.46" width="6.60" height="6.60" style="color:#222" stroke="#222" stroke-width="1.15"/>
<use href="#g_venus" x="641.10" y="165.36" width="6.80" height="6.80" style="color:#111" stroke="#111" stroke-width="1.1"/>
<use href="#g_saturn" x="653.65" y="165.36" width="6.80" height="6.80" style="color:#111" stroke="#111" stroke-width="1.1"/>
<use href="#g_saturn" x="666.20" y="165.36" width="6.80" height="6.80" style="color:#111" stroke="#111" stroke-width="1.1"/>
<use href="#g_saturn" x="678.75" y="165.36" width="6.80" height="6.80" style="color:#111" stroke="#111" stroke-width="1.1"/>
<path d="M692.50,165.36 C698.70,165.76 698.70,171.96 692.50,172.16 C696.10,170.56 696.10,166.96 692.50,165.36 Z" fill="#f03030"/>
<use href="#g_uranus" x="703.85" y="165.36" width="6.80" height="6.80" style="color:#111" stroke="#111" stroke-width="1.1"/>
<use href="#g_sun" x="716.40" y="165.36" width="6.80" height="6.80" style="color:#f03030" stroke="#f03030" stroke-width="1.05"/>
<text x="729.80" y="171.16" font-family="Liberation Sans" font-size="6.6" fill="#222" font-weight="normal" text-anchor="start" style="white-space:pre" textLength="20.70" lengthAdjust="spacingAndGlyphs">Турайс</text>
<text x="579.20" y="180.72" font-family="Liberation Sans" font-size="6.8" fill="#333" font-weight="normal" text-anchor="middle" style="white-space:pre" textLength="8.00" lengthAdjust="spacingAndGlyphs">Asc</text>
<text x="589.60" y="180.72" font-family="Liberation Mono" font-size="7.8" fill="#404040" font-weight="normal" text-anchor="start" style="white-space:pre" textLength="37.20" lengthAdjust="spacingAndGlyphs"> 6°43'23"</text>
<use href="#g_aquarius" x="629.10" y="174.82" width="6.60" height="6.60" style="color:#222" stroke="#222" stroke-width="1.15"/>
<use href="#g_earth" x="641.10" y="174.72" width="6.80" height="6.80" style="color:#111" stroke="#111" stroke-width="1.1"/>
<use href="#g_neptune" x="653.65" y="174.72" width="6.80" height="6.80" style="color:#111" stroke="#111" stroke-width="1.1"/>
<use href="#g_saturn" x="666.20" y="174.72" width="6.80" height="6.80" style="color:#111" stroke="#111" stroke-width="1.1"/>
<use href="#g_mercury" x="678.75" y="174.72" width="6.80" height="6.80" style="color:#111" stroke="#111" stroke-width="1.1"/>
<use href="#g_venus" x="691.30" y="174.72" width="6.80" height="6.80" style="color:#111" stroke="#111" stroke-width="1.1"/>
<use href="#g_sun" x="703.85" y="174.72" width="6.80" height="6.80" style="color:#f03030" stroke="#f03030" stroke-width="1.05"/>
<use href="#g_uranus" x="716.40" y="174.72" width="6.80" height="6.80" style="color:#111" stroke="#111" stroke-width="1.1"/>
<rect x="575.3" y="184.18" width="7.6" height="6.6" rx="1.2" fill="none" stroke="#555" stroke-width="0.8"/>
<text x="579.10" y="189.58" font-family="Liberation Sans" font-size="5.8" fill="#333" font-weight="bold" text-anchor="middle" style="white-space:pre" textLength="3.60" lengthAdjust="spacingAndGlyphs">2</text>
<text x="589.60" y="190.08" font-family="Liberation Mono" font-size="7.8" fill="#404040" font-weight="normal" text-anchor="start" style="white-space:pre" textLength="37.20" lengthAdjust="spacingAndGlyphs">17°35'46"</text>
<use href="#g_aries" x="629.10" y="184.18" width="6.60" height="6.60" style="color:#222" stroke="#222" stroke-width="1.15"/>
<use href="#g_uranus" x="641.10" y="184.08" width="6.80" height="6.80" style="color:#111" stroke="#111" stroke-width="1.1"/>
<use href="#g_sun" x="653.65" y="184.08" width="6.80" height="6.80" style="color:#f03030" stroke="#f03030" stroke-width="1.05"/>
<use href="#g_sun" x="666.20" y="184.08" width="6.80" height="6.80" style="color:#f03030" stroke="#f03030" stroke-width="1.05"/>
<use href="#g_mercury" x="678.75" y="184.08" width="6.80" height="6.80" style="color:#111" stroke="#111" stroke-width="1.1"/>
<use href="#g_sun" x="691.30" y="184.08" width="6.80" height="6.80" style="color:#f03030" stroke="#f03030" stroke-width="1.05"/>
<use href="#g_venus" x="703.85" y="184.08" width="6.80" height="6.80" style="color:#111" stroke="#111" stroke-width="1.1"/>
<use href="#g_saturn" x="716.40" y="184.08" width="6.80" height="6.80" style="color:#111" stroke="#111" stroke-width="1.1"/>
<text x="729.80" y="189.88" font-family="Liberation Sans" font-size="6.6" fill="#222" font-weight="normal" text-anchor="start" style="white-space:pre" textLength="27.60" lengthAdjust="spacingAndGlyphs">Модус II</text>
<rect x="575.3" y="193.54" width="7.6" height="6.6" rx="1.2" fill="none" stroke="#555" stroke-width="0.8"/>
<text x="579.10" y="198.94" font-family="Liberation Sans" font-size="5.8" fill="#333" font-weight="bold" text-anchor="middle" style="white-space:pre" textLength="3.60" lengthAdjust="spacingAndGlyphs">3</text>
<text x="589.60" y="199.44" font-family="Liberation Mono" font-size="7.8" fill="#404040" font-weight="normal" text-anchor="start" style="white-space:pre" textLength="37.20" lengthAdjust="spacingAndGlyphs">23°59'52"</text>
<use href="#g_taurus" x="629.10" y="193.54" width="6.60" height="6.60" style="color:#222" stroke="#222" stroke-width="1.15"/>
<use href="#g_venus" x="641.10" y="193.44" width="6.80" height="6.80" style="color:#111" stroke="#111" stroke-width="1.1"/>
<path d="M654.85,193.44 C661.05,193.84 661.05,200.04 654.85,200.24 C658.45,198.64 658.45,195.04 654.85,193.44 Z" fill="#f03030"/>
<use href="#g_venus" x="666.20" y="193.44" width="6.80" height="6.80" style="color:#111" stroke="#111" stroke-width="1.1"/>
<use href="#g_saturn" x="678.75" y="193.44" width="6.80" height="6.80" style="color:#111" stroke="#111" stroke-width="1.1"/>
<use href="#g_saturn" x="691.30" y="193.44" width="6.80" height="6.80" style="color:#111" stroke="#111" stroke-width="1.1"/>
<use href="#g_mars" x="703.85" y="193.44" width="6.80" height="6.80" style="color:#111" stroke="#111" stroke-width="1.1"/>
<use href="#g_earth" x="716.40" y="193.44" width="6.80" height="6.80" style="color:#111" stroke="#111" stroke-width="1.1"/>
<text x="729.80" y="199.24" font-family="Liberation Sans" font-size="6.6" fill="#222" font-weight="normal" text-anchor="start" style="white-space:pre" textLength="20.70" lengthAdjust="spacingAndGlyphs">Заурак</text>
<text x="579.20" y="208.80" font-family="Liberation Sans" font-size="6.8" fill="#333" font-weight="normal" text-anchor="middle" style="white-space:pre" textLength="5.80" lengthAdjust="spacingAndGlyphs">IC</text>
<text x="589.60" y="208.80" font-family="Liberation Mono" font-size="7.8" fill="#404040" font-weight="normal" text-anchor="start" style="white-space:pre" textLength="37.20" lengthAdjust="spacingAndGlyphs"> 9°2O'14"</text>
<use href="#g_gemini" x="629.10" y="202.90" width="6.60" height="6.60" style="color:#222" stroke="#222" stroke-width="1.15"/>
<use href="#g_mercury" x="641.10" y="202.80" width="6.80" height="6.80" style="color:#111" stroke="#111" stroke-width="1.1"/>
<use href="#g_saturn" x="666.20" y="202.80" width="6.80" height="6.80" style="color:#111" stroke="#111" stroke-width="1.1"/>
<use href="#g_jupiter" x="678.75" y="202.80" width="6.80" height="6.80" style="color:#111" stroke="#111" stroke-width="1.1"/>
<use href="#g_jupiter" x="691.30" y="202.80" width="6.80" height="6.80" style="color:#111" stroke="#111" stroke-width="1.1"/>
<use href="#g_jupiter" x="703.85" y="202.80" width="6.80" height="6.80" style="color:#111" stroke="#111" stroke-width="1.1"/>
<rect x="575.3" y="212.26" width="7.6" height="6.6" rx="1.2" fill="none" stroke="#555" stroke-width="0.8"/>
<text x="579.10" y="217.66" font-family="Liberation Sans" font-size="5.8" fill="#333" font-weight="bold" text-anchor="middle" style="white-space:pre" textLength="3.60" lengthAdjust="spacingAndGlyphs">5</text>
<text x="589.60" y="218.16" font-family="Liberation Mono" font-size="7.8" fill="#404040" font-weight="normal" text-anchor="start" style="white-space:pre" textLength="37.20" lengthAdjust="spacingAndGlyphs">2O°48'51"</text>
<use href="#g_gemini" x="629.10" y="212.26" width="6.60" height="6.60" style="color:#222" stroke="#222" stroke-width="1.15"/>
<use href="#g_mercury" x="641.10" y="212.16" width="6.80" height="6.80" style="color:#111" stroke="#111" stroke-width="1.1"/>
<use href="#g_saturn" x="666.20" y="212.16" width="6.80" height="6.80" style="color:#111" stroke="#111" stroke-width="1.1"/>
<use href="#g_mars" x="678.75" y="212.16" width="6.80" height="6.80" style="color:#111" stroke="#111" stroke-width="1.1"/>
<use href="#g_sun" x="691.30" y="212.16" width="6.80" height="6.80" style="color:#f03030" stroke="#f03030" stroke-width="1.05"/>
<use href="#g_jupiter" x="703.85" y="212.16" width="6.80" height="6.80" style="color:#111" stroke="#111" stroke-width="1.1"/>
<rect x="575.3" y="221.62" width="7.6" height="6.6" rx="1.2" fill="none" stroke="#555" stroke-width="0.8"/>
<text x="579.10" y="227.02" font-family="Liberation Sans" font-size="5.8" fill="#333" font-weight="bold" text-anchor="middle" style="white-space:pre" textLength="3.60" lengthAdjust="spacingAndGlyphs">6</text>
<text x="589.60" y="227.52" font-family="Liberation Mono" font-size="7.8" fill="#404040" font-weight="normal" text-anchor="start" style="white-space:pre" textLength="37.20" lengthAdjust="spacingAndGlyphs"> 5° 8'24"</text>
<use href="#g_cancer" x="629.10" y="221.62" width="6.60" height="6.60" style="color:#222" stroke="#222" stroke-width="1.15"/>
<path d="M642.30,221.52 C648.50,221.92 648.50,228.12 642.30,228.32 C645.90,226.72 645.90,223.12 642.30,221.52 Z" fill="#f03030"/>
<use href="#g_jupiter" x="653.65" y="221.52" width="6.80" height="6.80" style="color:#111" stroke="#111" stroke-width="1.1"/>
<use href="#g_venus" x="666.20" y="221.52" width="6.80" height="6.80" style="color:#111" stroke="#111" stroke-width="1.1"/>
<use href="#g_mars" x="678.75" y="221.52" width="6.80" height="6.80" style="color:#111" stroke="#111" stroke-width="1.1"/>
<use href="#g_venus" x="691.30" y="221.52" width="6.80" height="6.80" style="color:#111" stroke="#111" stroke-width="1.1"/>
<use href="#g_saturn" x="703.85" y="221.52" width="6.80" height="6.80" style="color:#111" stroke="#111" stroke-width="1.1"/>
<use href="#g_mars" x="716.40" y="221.52" width="6.80" height="6.80" style="color:#111" stroke="#111" stroke-width="1.1"/>
<text x="579.20" y="236.88" font-family="Liberation Sans" font-size="6.8" fill="#333" font-weight="normal" text-anchor="middle" style="white-space:pre" textLength="8.00" lengthAdjust="spacingAndGlyphs">Dsc</text>
<text x="589.60" y="236.88" font-family="Liberation Mono" font-size="7.8" fill="#404040" font-weight="normal" text-anchor="start" style="white-space:pre" textLength="37.20" lengthAdjust="spacingAndGlyphs"> 6°43'23"</text>
<use href="#g_leo" x="629.10" y="230.98" width="6.60" height="6.60" style="color:#222" stroke="#222" stroke-width="1.15"/>
<use href="#g_sun" x="641.10" y="230.88" width="6.80" height="6.80" style="color:#f03030" stroke="#f03030" stroke-width="1.05"/>
<use href="#g_uranus" x="653.65" y="230.88" width="6.80" height="6.80" style="color:#111" stroke="#111" stroke-width="1.1"/>
<use href="#g_sun" x="666.20" y="230.88" width="6.80" height="6.80" style="color:#f03030" stroke="#f03030" stroke-width="1.05"/>
<use href="#g_venus" x="678.75" y="230.88" width="6.80" height="6.80" style="color:#111" stroke="#111" stroke-width="1.1"/>
<use href="#g_saturn" x="691.30" y="230.88" width="6.80" height="6.80" style="color:#111" stroke="#111" stroke-width="1.1"/>
<use href="#g_earth" x="703.85" y="230.88" width="6.80" height="6.80" style="color:#111" stroke="#111" stroke-width="1.1"/>
<use href="#g_neptune" x="716.40" y="230.88" width="6.80" height="6.80" style="color:#111" stroke="#111" stroke-width="1.1"/>
<rect x="575.3" y="240.34" width="7.6" height="6.6" rx="1.2" fill="none" stroke="#555" stroke-width="0.8"/>
<text x="579.10" y="245.74" font-family="Liberation Sans" font-size="5.8" fill="#333" font-weight="bold" text-anchor="middle" style="white-space:pre" textLength="3.60" lengthAdjust="spacingAndGlyphs">8</text>
<text x="589.60" y="246.24" font-family="Liberation Mono" font-size="7.8" fill="#404040" font-weight="normal" text-anchor="start" style="white-space:pre" textLength="37.20" lengthAdjust="spacingAndGlyphs">17°35'46"</text>
<use href="#g_libra" x="629.10" y="240.34" width="6.60" height="6.60" style="color:#222" stroke="#222" stroke-width="1.15"/>
<use href="#g_venus" x="641.10" y="240.24" width="6.80" height="6.80" style="color:#111" stroke="#111" stroke-width="1.1"/>
<use href="#g_saturn" x="653.65" y="240.24" width="6.80" height="6.80" style="color:#111" stroke="#111" stroke-width="1.1"/>
<use href="#g_saturn" x="666.20" y="240.24" width="6.80" height="6.80" style="color:#111" stroke="#111" stroke-width="1.1"/>
<use href="#g_jupiter" x="678.75" y="240.24" width="6.80" height="6.80" style="color:#111" stroke="#111" stroke-width="1.1"/>
<use href="#g_saturn" x="691.30" y="240.24" width="6.80" height="6.80" style="color:#111" stroke="#111" stroke-width="1.1"/>
<use href="#g_uranus" x="703.85" y="240.24" width="6.80" height="6.80" style="color:#111" stroke="#111" stroke-width="1.1"/>
<use href="#g_sun" x="716.40" y="240.24" width="6.80" height="6.80" style="color:#f03030" stroke="#f03030" stroke-width="1.05"/>
<text x="729.80" y="246.04" font-family="Liberation Sans" font-size="6.6" fill="#222" font-weight="normal" text-anchor="start" style="white-space:pre" textLength="13.80" lengthAdjust="spacingAndGlyphs">Краз</text>
<rect x="575.3" y="249.70" width="7.6" height="6.6" rx="1.2" fill="none" stroke="#555" stroke-width="0.8"/>
<text x="579.10" y="255.10" font-family="Liberation Sans" font-size="5.8" fill="#333" font-weight="bold" text-anchor="middle" style="white-space:pre" textLength="3.60" lengthAdjust="spacingAndGlyphs">9</text>
<text x="589.60" y="255.60" font-family="Liberation Mono" font-size="7.8" fill="#404040" font-weight="normal" text-anchor="start" style="white-space:pre" textLength="37.20" lengthAdjust="spacingAndGlyphs">23°59'52"</text>
<use href="#g_scorpio" x="629.10" y="249.70" width="6.60" height="6.60" style="color:#222" stroke="#222" stroke-width="1.15"/>
<use href="#g_mars" x="641.10" y="249.60" width="6.80" height="6.80" style="color:#111" stroke="#111" stroke-width="1.1"/>
<use href="#g_earth" x="653.65" y="249.60" width="6.80" height="6.80" style="color:#111" stroke="#111" stroke-width="1.1"/>
<use href="#g_venus" x="666.20" y="249.60" width="6.80" height="6.80" style="color:#111" stroke="#111" stroke-width="1.1"/>
<use href="#g_jupiter" x="678.75" y="249.60" width="6.80" height="6.80" style="color:#111" stroke="#111" stroke-width="1.1"/>
<use href="#g_venus" x="691.30" y="249.60" width="6.80" height="6.80" style="color:#111" stroke="#111" stroke-width="1.1"/>
<use href="#g_venus" x="703.85" y="249.60" width="6.80" height="6.80" style="color:#111" stroke="#111" stroke-width="1.1"/>
<path d="M717.60,249.60 C723.80,250.00 723.80,256.20 717.60,256.40 C721.20,254.80 721.20,251.20 717.60,249.60 Z" fill="#f03030"/>
<text x="729.80" y="255.40" font-family="Liberation Sans" font-size="6.6" fill="#222" font-weight="normal" text-anchor="start" style="white-space:pre" textLength="17.25" lengthAdjust="spacingAndGlyphs">Агена</text>
<text x="579.20" y="264.96" font-family="Liberation Sans" font-size="6.8" fill="#333" font-weight="normal" text-anchor="middle" style="white-space:pre" textLength="7.40" lengthAdjust="spacingAndGlyphs">MC</text>
<text x="589.60" y="264.96" font-family="Liberation Mono" font-size="7.8" fill="#404040" font-weight="normal" text-anchor="start" style="white-space:pre" textLength="37.20" lengthAdjust="spacingAndGlyphs"> 9°2O'14"</text>
<use href="#g_sagittarius" x="629.10" y="259.06" width="6.60" height="6.60" style="color:#222" stroke="#222" stroke-width="1.15"/>
<use href="#g_jupiter" x="641.10" y="258.96" width="6.80" height="6.80" style="color:#111" stroke="#111" stroke-width="1.1"/>
<use href="#g_sun" x="666.20" y="258.96" width="6.80" height="6.80" style="color:#f03030" stroke="#f03030" stroke-width="1.05"/>
<use href="#g_jupiter" x="678.75" y="258.96" width="6.80" height="6.80" style="color:#111" stroke="#111" stroke-width="1.1"/>
<use href="#g_mercury" x="691.30" y="258.96" width="6.80" height="6.80" style="color:#111" stroke="#111" stroke-width="1.1"/>
<use href="#g_mercury" x="703.85" y="258.96" width="6.80" height="6.80" style="color:#111" stroke="#111" stroke-width="1.1"/>
<text x="729.80" y="264.76" font-family="Liberation Sans" font-size="6.6" fill="#222" font-weight="normal" text-anchor="start" style="white-space:pre" textLength="10.35" lengthAdjust="spacingAndGlyphs">Хан</text>
<rect x="575.3" y="268.42" width="7.6" height="6.6" rx="1.2" fill="none" stroke="#555" stroke-width="0.8"/>
<text x="579.10" y="273.82" font-family="Liberation Sans" font-size="5.8" fill="#333" font-weight="bold" text-anchor="middle" style="white-space:pre" textLength="5.20" lengthAdjust="spacingAndGlyphs">11</text>
<text x="589.60" y="274.32" font-family="Liberation Mono" font-size="7.8" fill="#404040" font-weight="normal" text-anchor="start" style="white-space:pre" textLength="37.20" lengthAdjust="spacingAndGlyphs">2O°48'51"</text>
<use href="#g_sagittarius" x="629.10" y="268.42" width="6.60" height="6.60" style="color:#222" stroke="#222" stroke-width="1.15"/>
<use href="#g_jupiter" x="641.10" y="268.32" width="6.80" height="6.80" style="color:#111" stroke="#111" stroke-width="1.1"/>
<use href="#g_sun" x="666.20" y="268.32" width="6.80" height="6.80" style="color:#f03030" stroke="#f03030" stroke-width="1.05"/>
<use href="#g_mercury" x="678.75" y="268.32" width="6.80" height="6.80" style="color:#111" stroke="#111" stroke-width="1.1"/>
<use href="#g_saturn" x="691.30" y="268.32" width="6.80" height="6.80" style="color:#111" stroke="#111" stroke-width="1.1"/>
<use href="#g_mercury" x="703.85" y="268.32" width="6.80" height="6.80" style="color:#111" stroke="#111" stroke-width="1.1"/>
<rect x="575.3" y="277.78" width="7.6" height="6.6" rx="1.2" fill="none" stroke="#555" stroke-width="0.8"/>
<text x="579.10" y="283.18" font-family="Liberation Sans" font-size="5.8" fill="#333" font-weight="bold" text-anchor="middle" style="white-space:pre" textLength="5.20" lengthAdjust="spacingAndGlyphs">12</text>
<text x="589.60" y="283.68" font-family="Liberation Mono" font-size="7.8" fill="#404040" font-weight="normal" text-anchor="start" style="white-space:pre" textLength="37.20" lengthAdjust="spacingAndGlyphs"> 5° 8'24"</text>
<use href="#g_capricorn" x="629.10" y="277.78" width="6.60" height="6.60" style="color:#222" stroke="#222" stroke-width="1.15"/>
<use href="#g_saturn" x="641.10" y="277.68" width="6.80" height="6.80" style="color:#111" stroke="#111" stroke-width="1.1"/>
<use href="#g_mars" x="653.65" y="277.68" width="6.80" height="6.80" style="color:#111" stroke="#111" stroke-width="1.1"/>
<use href="#g_venus" x="666.20" y="277.68" width="6.80" height="6.80" style="color:#111" stroke="#111" stroke-width="1.1"/>
<use href="#g_mercury" x="678.75" y="277.68" width="6.80" height="6.80" style="color:#111" stroke="#111" stroke-width="1.1"/>
<use href="#g_jupiter" x="691.30" y="277.68" width="6.80" height="6.80" style="color:#111" stroke="#111" stroke-width="1.1"/>
<path d="M705.05,277.68 C711.25,278.08 711.25,284.28 705.05,284.48 C708.65,282.88 708.65,279.28 705.05,277.68 Z" fill="#f03030"/>
<use href="#g_jupiter" x="716.40" y="277.68" width="6.80" height="6.80" style="color:#111" stroke="#111" stroke-width="1.1"/>
<text x="729.80" y="283.48" font-family="Liberation Sans" font-size="6.6" fill="#222" font-weight="normal" text-anchor="start" style="white-space:pre" textLength="48.30" lengthAdjust="spacingAndGlyphs">Каус Аустралис</text>
<use href="#g_venus" x="766.80" y="297.00" width="6.40" height="6.40" style="color:#111" stroke="#111" stroke-width="1.3"/>
<text x="776.70" y="302.40" font-family="Liberation Sans" font-size="5.5" fill="#222" font-weight="normal" text-anchor="middle" style="white-space:pre">=</text>
<use href="#g_mars" x="780.50" y="297.10" width="6.20" height="6.20" style="color:#111" stroke="#111" stroke-width="1.3"/>
<use href="#g_mercury" x="763.20" y="305.80" width="6.60" height="6.60" style="color:#111" stroke="#111" stroke-width="1.3"/>
<text x="771.80" y="311.40" font-family="Liberation Sans" font-size="5.2" fill="#222" font-weight="normal" text-anchor="middle" style="white-space:pre">t</text>
<use href="#g_venus" x="773.50" y="305.90" width="6.40" height="6.40" style="color:#111" stroke="#111" stroke-width="1.3"/>
<line x1="400" y1="376.3" x2="725" y2="376.3" stroke="#4aa0dc" stroke-width="0.9"/>
<line x1="400" y1="399.5" x2="725" y2="399.5" stroke="#4aa0dc" stroke-width="0.8"/>
<line x1="404.25" y1="373" x2="404.25" y2="376.3" stroke="#2a8ad0" stroke-width="1.1"/>
<line x1="414.83" y1="373" x2="414.83" y2="376.3" stroke="#2a8ad0" stroke-width="1.1"/>
<line x1="425.42" y1="373" x2="425.42" y2="376.3" stroke="#2a8ad0" stroke-width="1.1"/>
<line x1="436.00" y1="373" x2="436.00" y2="376.3" stroke="#2a8ad0" stroke-width="1.1"/>
<line x1="446.59" y1="373" x2="446.59" y2="376.3" stroke="#2a8ad0" stroke-width="1.1"/>
<line x1="457.18" y1="373" x2="457.18" y2="376.3" stroke="#2a8ad0" stroke-width="1.1"/>
<line x1="467.76" y1="373" x2="467.76" y2="376.3" stroke="#2a8ad0" stroke-width="1.1"/>
<line x1="478.35" y1="373" x2="478.35" y2="376.3" stroke="#2a8ad0" stroke-width="1.1"/>
<line x1="488.93" y1="373" x2="488.93" y2="376.3" stroke="#2a8ad0" stroke-width="1.1"/>
<line x1="499.51" y1="373" x2="499.51" y2="376.3" stroke="#2a8ad0" stroke-width="1.1"/>
<line x1="510.10" y1="373" x2="510.10" y2="376.3" stroke="#2a8ad0" stroke-width="1.1"/>
<line x1="520.68" y1="373" x2="520.68" y2="376.3" stroke="#2a8ad0" stroke-width="1.1"/>
<line x1="531.27" y1="373" x2="531.27" y2="376.3" stroke="#2a8ad0" stroke-width="1.1"/>
<line x1="541.86" y1="373" x2="541.86" y2="376.3" stroke="#2a8ad0" stroke-width="1.1"/>
<line x1="552.44" y1="373" x2="552.44" y2="376.3" stroke="#2a8ad0" stroke-width="1.1"/>
<line x1="563.02" y1="373" x2="563.02" y2="376.3" stroke="#2a8ad0" stroke-width="1.1"/>
<line x1="573.61" y1="373" x2="573.61" y2="376.3" stroke="#2a8ad0" stroke-width="1.1"/>
<line x1="584.20" y1="373" x2="584.20" y2="376.3" stroke="#2a8ad0" stroke-width="1.1"/>
<line x1="594.78" y1="373" x2="594.78" y2="376.3" stroke="#2a8ad0" stroke-width="1.1"/>
<line x1="605.37" y1="373" x2="605.37" y2="376.3" stroke="#2a8ad0" stroke-width="1.1"/>
<line x1="615.95" y1="373" x2="615.95" y2="376.3" stroke="#2a8ad0" stroke-width="1.1"/>
<line x1="626.54" y1="373" x2="626.54" y2="376.3" stroke="#2a8ad0" stroke-width="1.1"/>
<line x1="637.12" y1="373" x2="637.12" y2="376.3" stroke="#2a8ad0" stroke-width="1.1"/>
<line x1="647.71" y1="373" x2="647.71" y2="376.3" stroke="#2a8ad0" stroke-width="1.1"/>
<line x1="658.29" y1="373" x2="658.29" y2="376.3" stroke="#2a8ad0" stroke-width="1.1"/>
<line x1="668.88" y1="373" x2="668.88" y2="376.3" stroke="#2a8ad0" stroke-width="1.1"/>
<line x1="679.46" y1="373" x2="679.46" y2="376.3" stroke="#2a8ad0" stroke-width="1.1"/>
<line x1="690.05" y1="373" x2="690.05" y2="376.3" stroke="#2a8ad0" stroke-width="1.1"/>
<line x1="700.63" y1="373" x2="700.63" y2="376.3" stroke="#2a8ad0" stroke-width="1.1"/>
<line x1="711.22" y1="373" x2="711.22" y2="376.3" stroke="#2a8ad0" stroke-width="1.1"/>
<line x1="721.80" y1="373" x2="721.80" y2="376.3" stroke="#2a8ad0" stroke-width="1.1"/>
<text x="404.25" y="372.20" font-family="Liberation Sans" font-size="6" fill="#222" font-weight="normal" text-anchor="middle" style="white-space:pre">0</text>
<text x="457.18" y="372.20" font-family="Liberation Sans" font-size="6" fill="#222" font-weight="normal" text-anchor="middle" style="white-space:pre">5</text>
<text x="510.10" y="372.20" font-family="Liberation Sans" font-size="6" fill="#222" font-weight="normal" text-anchor="middle" style="white-space:pre">10</text>
<text x="563.02" y="372.20" font-family="Liberation Sans" font-size="6" fill="#222" font-weight="normal" text-anchor="middle" style="white-space:pre">15</text>
<text x="615.95" y="372.20" font-family="Liberation Sans" font-size="6" fill="#222" font-weight="normal" text-anchor="middle" style="white-space:pre">20</text>
<text x="668.88" y="372.20" font-family="Liberation Sans" font-size="6" fill="#222" font-weight="normal" text-anchor="middle" style="white-space:pre">25</text>
<text x="721.80" y="372.20" font-family="Liberation Sans" font-size="6" fill="#222" font-weight="normal" text-anchor="middle" style="white-space:pre">30</text>
<line x1="421.19" y1="376.3" x2="421.19" y2="380.6" stroke="#4aa0dc" stroke-width="0.6"/>
<use href="#g_sun" x="418.49" y="381.60" width="5.40" height="5.40" style="color:#f03030" stroke="#f03030" stroke-width="1.2"/>
<use href="#g_libra" x="418.49" y="390.30" width="5.40" height="5.40" style="color:#f03030" stroke="#f03030" stroke-width="1.1"/>
<line x1="522.70" y1="376.3" x2="522.70" y2="380.6" stroke="#4aa0dc" stroke-width="0.6"/>
<path d="M521.10,381.40 C525.50,382.00 525.50,387.00 521.10,387.40 C523.50,385.60 523.50,383.20 521.10,381.40 Z" fill="#f03030"/>
<use href="#g_taurus" x="520.00" y="390.30" width="5.40" height="5.40" style="color:#f03030" stroke="#f03030" stroke-width="1.1"/>
<line x1="568.32" y1="376.3" x2="568.00" y2="380.6" stroke="#4aa0dc" stroke-width="0.6"/>
<use href="#g_venus" x="565.30" y="381.60" width="5.40" height="5.40" style="color:#222" stroke="#222" stroke-width="1.2"/>
<use href="#g_scorpio" x="565.30" y="390.30" width="5.40" height="5.40" style="color:#222" stroke="#222" stroke-width="1.1"/>
<line x1="576.89" y1="376.3" x2="576.30" y2="380.6" stroke="#4aa0dc" stroke-width="0.6"/>
<use href="#g_fortune" x="573.60" y="381.60" width="5.40" height="5.40" style="color:#222" stroke="#222" stroke-width="1.2"/>
<use href="#g_virgo" x="573.60" y="390.30" width="5.40" height="5.40" style="color:#222" stroke="#222" stroke-width="1.1"/>
<line x1="650.46" y1="376.3" x2="650.46" y2="380.6" stroke="#4aa0dc" stroke-width="0.6"/>
<use href="#g_jupiter" x="647.76" y="381.60" width="5.40" height="5.40" style="color:#222" stroke="#222" stroke-width="1.2"/>
<use href="#g_aquarius" x="647.76" y="390.30" width="5.40" height="5.40" style="color:#222" stroke="#222" stroke-width="1.1"/>
<line x1="669.62" y1="376.3" x2="669.62" y2="380.6" stroke="#4aa0dc" stroke-width="0.6"/>
<use href="#g_mercury" x="666.92" y="381.60" width="5.40" height="5.40" style="color:#222" stroke="#222" stroke-width="1.2"/>
<use href="#g_libra" x="666.92" y="390.30" width="5.40" height="5.40" style="color:#222" stroke="#222" stroke-width="1.1"/>
<line x1="454.53" y1="376.3" x2="450.00" y2="380.6" stroke="#4aa0dc" stroke-width="0.6"/>
<use href="#g_node" x="447.30" y="381.60" width="5.40" height="5.40" style="color:#222" stroke="#222" stroke-width="1.2"/>
<use href="#g_gemini" x="447.30" y="390.30" width="5.40" height="5.40" style="color:#222" stroke="#222" stroke-width="1.1"/>
<line x1="464.90" y1="376.3" x2="459.30" y2="380.6" stroke="#4aa0dc" stroke-width="0.6"/>
<use href="#g_star" x="456.60" y="381.60" width="5.40" height="5.40" style="color:#222" stroke="#222" stroke-width="1.2"/>
<use href="#g_libra" x="456.60" y="390.30" width="5.40" height="5.40" style="color:#222" stroke="#222" stroke-width="1.1"/>
<line x1="469.03" y1="376.3" x2="468.80" y2="380.6" stroke="#4aa0dc" stroke-width="0.6"/>
<use href="#g_mars" x="466.10" y="381.60" width="5.40" height="5.40" style="color:#222" stroke="#222" stroke-width="1.2"/>
<use href="#g_libra" x="466.10" y="390.30" width="5.40" height="5.40" style="color:#222" stroke="#222" stroke-width="1.1"/>
<line x1="471.68" y1="376.3" x2="477.50" y2="380.6" stroke="#4aa0dc" stroke-width="0.6"/>
<use href="#g_lilith" x="474.80" y="381.60" width="5.40" height="5.40" style="color:#222" stroke="#222" stroke-width="1.2"/>
<use href="#g_gemini" x="474.80" y="390.30" width="5.40" height="5.40" style="color:#222" stroke="#222" stroke-width="1.1"/>
<line x1="479.40" y1="376.3" x2="486.30" y2="380.6" stroke="#4aa0dc" stroke-width="0.6"/>
<use href="#g_saturn" x="483.60" y="381.60" width="5.40" height="5.40" style="color:#222" stroke="#222" stroke-width="1.2"/>
<use href="#g_aquarius" x="483.60" y="390.30" width="5.40" height="5.40" style="color:#222" stroke="#222" stroke-width="1.1"/>
<rect x="0" y="418" width="800" height="10.4" fill="#f0f0f0"/>
<rect x="0" y="417.6" width="800" height="0.5" fill="#e0e0e0"/>
<text x="0.60" y="426.10" font-family="Liberation Sans" font-size="6.6" fill="#222" font-weight="normal" text-anchor="start" style="white-space:pre" textLength="33.60" lengthAdjust="spacingAndGlyphs">ХОРАР МОЙ</text>
<text x="43.50" y="426.10" font-family="Liberation Sans" font-size="6.6" fill="#222" font-weight="normal" text-anchor="start" style="white-space:pre" textLength="21.50" lengthAdjust="spacingAndGlyphs">II Натал</text>
<rect x="41.2" y="418.6" width="0.6" height="9.4" fill="#d4d4d4"/>
<rect x="83.0" y="418.6" width="0.6" height="9.4" fill="#d4d4d4"/>
<rect x="620.2" y="418.6" width="0.6" height="9.4" fill="#d4d4d4"/>
<rect x="626.7" y="418.6" width="0.6" height="9.4" fill="#d4d4d4"/>
<rect x="733.0" y="418.6" width="0.6" height="9.4" fill="#d4d4d4"/>
<rect x="601.8" y="419.8" width="8.4" height="8.4" fill="#0a8a0a"/>
<text x="684.00" y="426.10" font-family="Liberation Sans" font-size="6.4" fill="#222" font-weight="normal" text-anchor="start" style="white-space:pre" textLength="27.30" lengthAdjust="spacingAndGlyphs">0.00 (1.59)</text>
<text x="735.10" y="426.10" font-family="Liberation Sans" font-size="6.4" fill="#222" font-weight="normal" text-anchor="start" style="white-space:pre" textLength="62.20" lengthAdjust="spacingAndGlyphs">UT: 2021.09.26  0:55:45</text>
<rect x="0" y="428.3" width="800" height="21.7" fill="url(#tbg)"/>
<g fill="#fff"><rect x="8.4" y="435.4" width="3.9" height="3.8"/><rect x="12.8" y="435.0" width="4.2" height="4.2"/><rect x="8.4" y="439.7" width="3.9" height="3.8"/><rect x="12.8" y="439.7" width="4.2" height="4.2"/></g>
<g fill="none" stroke="#ddd" stroke-width="0.7"><rect x="33.4" y="436" width="5.6" height="6.6"/><path d="M32.6,435.2 h7.2 M32.6,443.4 h7.2 M41.6,436 v2.2 M41.6,440.4 v2.2"/></g>
<ellipse cx="63.7" cy="439.2" rx="6" ry="2.6" transform="rotate(-25 63.7 439.2)" fill="#3a8ae0"/><ellipse cx="64.4" cy="438.6" rx="3.4" ry="1.3" transform="rotate(-25 64.4 438.6)" fill="#d0ecff"/>
<path d="M89.9,433.8 L94.6,443.6 H85.2 Z" fill="#f08a10"/><path d="M88.2,437.4 h3.4 M87.2,440 h5.4" stroke="#fff" stroke-width="0.9"/><rect x="84.6" y="443.2" width="10.6" height="1.4" fill="#f08a10"/>
<ellipse cx="115.4" cy="439.2" rx="4.8" ry="5.4" fill="none" stroke="#e01a1a" stroke-width="2.2"/>
<circle cx="141" cy="439" r="5.3" fill="#e04030"/><path d="M141,439 L136.4,441.6 A5.3,5.3 0 0 0 143.6,443.6 Z" fill="#30a050"/><path d="M141,439 L143.6,443.6 A5.3,5.3 0 0 0 146.3,439 Z" fill="#f0c020"/><path d="M141,439 L146.3,439 A5.3,5.3 0 0 0 141,433.7 Z" fill="#e04030"/><circle cx="141" cy="439" r="2.4" fill="#fff"/><circle cx="141" cy="439" r="1.8" fill="#3a7ae0"/>
<text x="148.80" y="441.40" font-family="Liberation Sans" font-size="6.6" fill="#f4f4f4" font-weight="normal" text-anchor="start" style="white-space:pre" textLength="57.50" lengthAdjust="spacingAndGlyphs">Хорарная астроло...</text>
<rect x="131.3" y="448.8" width="78.7" height="1.2" fill="#76b9ed"/>
<rect x="213.8" y="428.6" width="82.5" height="21.4" fill="#4e4e50"/>
<rect x="213.8" y="448.4" width="82.5" height="1.6" fill="#76b9ed"/>
<circle cx="223.8" cy="439" r="5" fill="url(#zetg)"/><path d="M221,439 L223.2,441.6 L227.6,435.6" stroke="#fff" stroke-width="1" fill="none"/>
<text x="232.50" y="441.40" font-family="Liberation Sans" font-size="6.6" fill="#f4f4f4" font-weight="normal" text-anchor="start" style="white-space:pre" textLength="55.50" lengthAdjust="spacingAndGlyphs">24.09.2021  17:45:00</text>
<circle cx="581" cy="439.2" r="5.2" fill="#2f8ae0"/><circle cx="581" cy="439.2" r="4.2" fill="none" stroke="#fff" stroke-width="0.6"/>
<text x="581.00" y="441.80" font-family="Liberation Sans" font-size="6.6" fill="#fff" font-weight="bold" text-anchor="middle" style="white-space:pre">?</text>
<path d="M625,442 h10.4 a2.6,2.6 0 0 0 -0.6,-5.2 a3.6,3.6 0 0 0 -6.8,-0.6 a2.9,2.9 0 0 0 -3,5.8 z" fill="#b8d8f4"/>
<text x="639.90" y="442.00" font-family="Liberation Sans" font-size="7" fill="#f4f4f4" font-weight="normal" text-anchor="start" style="white-space:pre" textLength="47.20" lengthAdjust="spacingAndGlyphs">0°C  Облачно</text>
<path d="M696.6,441 l2.6,-2.6 l2.6,2.6" stroke="#eee" stroke-width="0.7" fill="none"/>
<path d="M707.4,437.8 h1.6 l2,-1.8 v6.4 l-2,-1.8 h-1.6 z" fill="none" stroke="#eee" stroke-width="0.6"/><path d="M712.4,437.6 a2.4,2.4 0 0 1 0,3.4 M713.6,436.6 a3.8,3.8 0 0 1 0,5.4" stroke="#eee" stroke-width="0.5" fill="none"/>
<text x="721.20" y="441.60" font-family="Liberation Sans" font-size="6.2" fill="#f4f4f4" font-weight="normal" text-anchor="start" style="white-space:pre" textLength="11.80" lengthAdjust="spacingAndGlyphs">РУС</text>
<text x="748.80" y="437.30" font-family="Liberation Sans" font-size="6.4" fill="#f4f4f4" font-weight="normal" text-anchor="start" style="white-space:pre" textLength="11.20" lengthAdjust="spacingAndGlyphs">7:55</text>
<text x="739.60" y="447.00" font-family="Liberation Sans" font-size="6.4" fill="#f4f4f4" font-weight="normal" text-anchor="start" style="white-space:pre" textLength="29.70" lengthAdjust="spacingAndGlyphs">26.09.2021</text>
<path d="M778.6,435.6 h9 v6.4 h-5.6 l-2,1.8 v-1.8 h-1.4 z" fill="none" stroke="#eee" stroke-width="0.7"/>
<circle cx="787.6" cy="443.4" r="3" fill="#222" stroke="#eee" stroke-width="0.5"/>
<text x="787.60" y="445.40" font-family="Liberation Sans" font-size="4.6" fill="#fff" font-weight="normal" text-anchor="middle" style="white-space:pre">4</text>
<rect x="773.4" y="7.4" width="27" height="10" fill="#fffbec" stroke="#8a8a8a" stroke-width="0.5"/>
<text x="774.60" y="15.00" font-family="Liberation Sans" font-size="6.4" fill="#222" font-weight="normal" text-anchor="start" style="white-space:pre" textLength="25.00" lengthAdjust="spacingAndGlyphs">Закрыть</text>
</svg></body></html>
